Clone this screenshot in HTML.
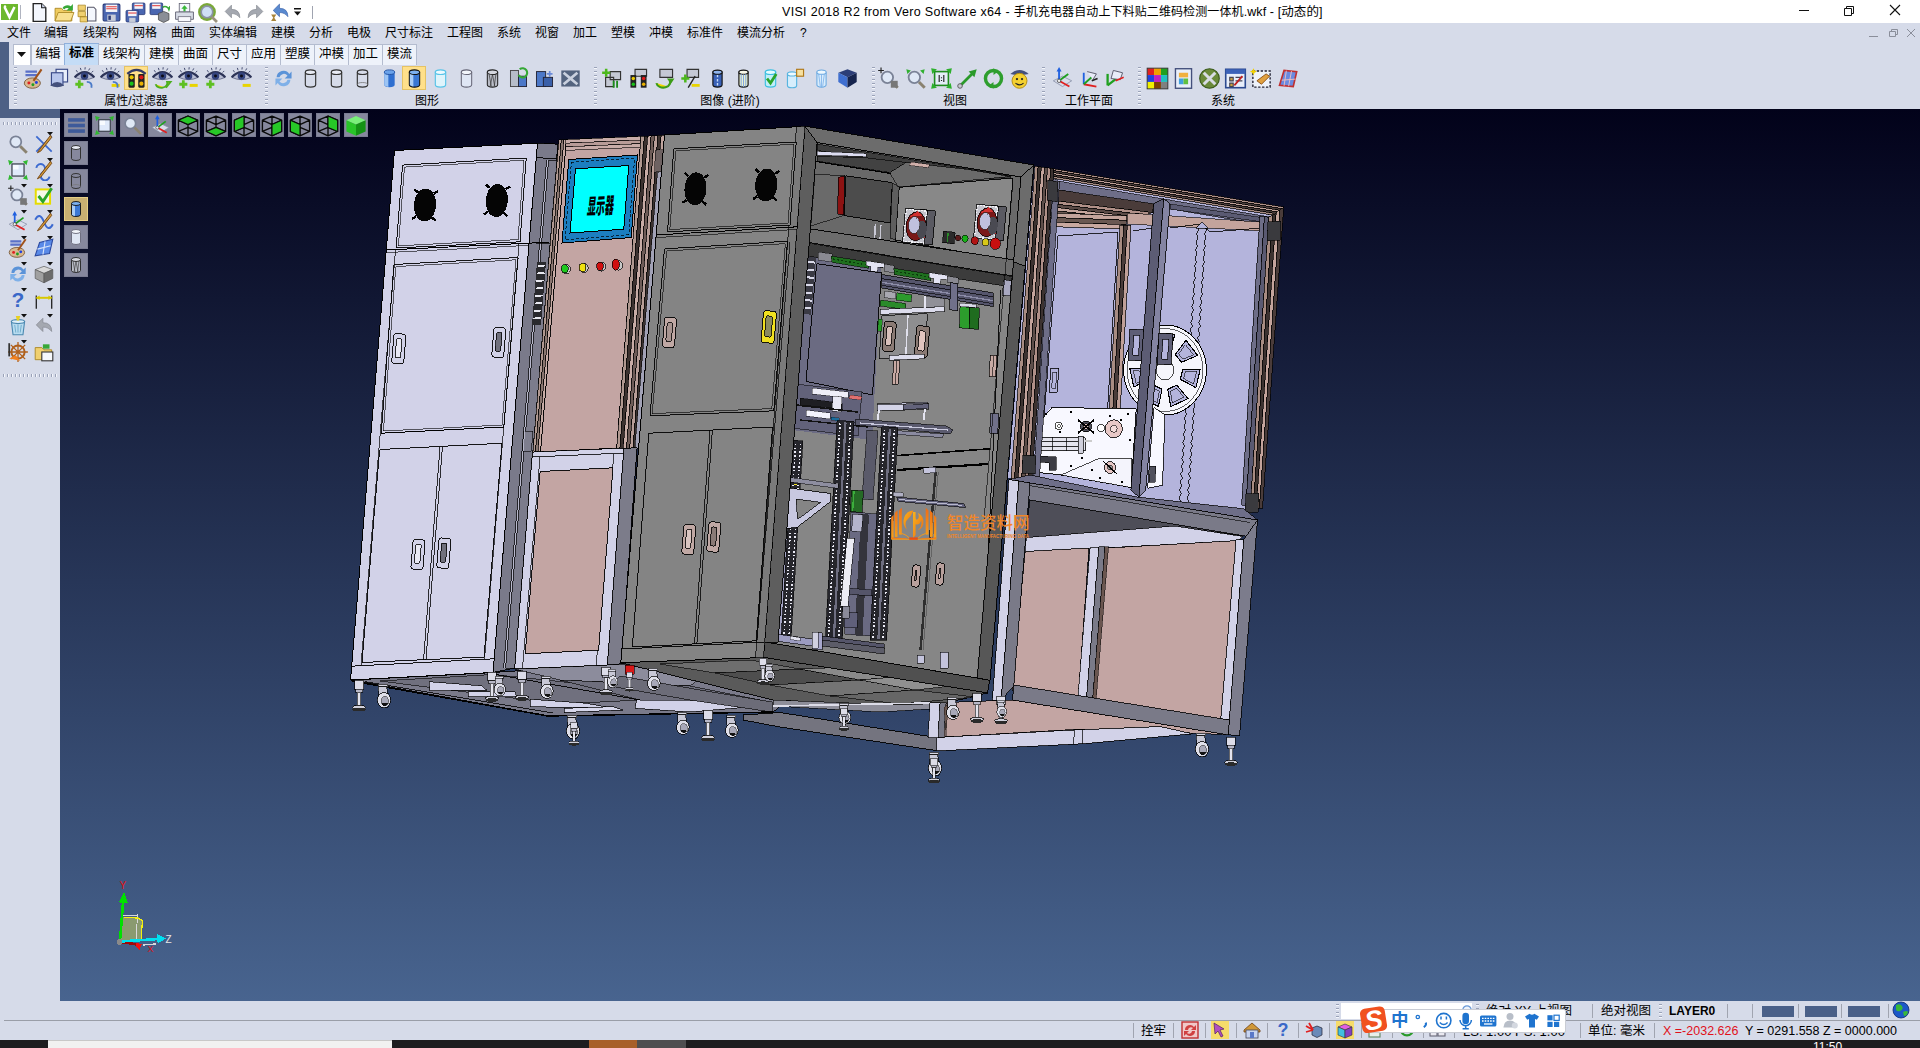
<!DOCTYPE html><html lang="zh"><head><meta charset="utf-8"><title>VISI 2018 R2</title><style>

*{box-sizing:border-box;margin:0;padding:0}
html,body{width:1920px;height:1048px;overflow:hidden;background:#d6dbe9;font-family:"Liberation Sans","Noto Sans CJK SC",sans-serif;font-size:12px;color:#000}
.abs{position:absolute}
#title{position:absolute;left:0;top:0;width:1920px;height:23px;background:#fff}
#title .t{position:absolute;left:782px;top:4px;width:540px;white-space:nowrap;font-size:12.5px;line-height:16px;color:#000;letter-spacing:0.1px}
#menu{position:absolute;left:0;top:23px;width:1920px;height:19px;background:#d6dbe9}
#menu span{position:absolute;top:2px;font-size:12px;line-height:17px;white-space:nowrap}
#leftstrip{position:absolute;left:0;top:42px;width:9px;height:76px;background:#4d6085}
#leftstrip2{position:absolute;left:0;top:109px;width:60px;height:9px;background:#4d6085}
#tabs{position:absolute;left:9px;top:42px;width:1911px;height:22px;background:#d6dbe9}
.tab{position:absolute;top:44px;height:21px;background:#eef2fa;border:1px solid #b4bccf;border-bottom:none;font-size:12.5px;line-height:19px;text-align:center;white-space:nowrap}
.tab.sel{top:43px;height:22px;background:#c4dcf6;border-color:#8fb0dc;font-weight:bold;line-height:19px}
#ribbon{position:absolute;left:9px;top:64px;width:1911px;height:45px;background:#d6dbe9}
.grp{position:absolute;top:94px;font-size:12px;line-height:14px;white-space:nowrap;transform:translateX(-50%)}
.grip{position:absolute;top:67px;width:3px;height:39px;background-image:repeating-linear-gradient(180deg,#9aa2b8 0 1px,#f4f6fb 1px 2px,transparent 2px 4px)}
.ic{position:absolute;width:20px;height:20px}
.hl{position:absolute;background:#ffe08a;border:1px solid #e5c365}
#leftbar{position:absolute;left:0;top:118px;width:60px;height:883px;background:#d6dbe9}
.hgrip{position:absolute;left:3px;width:54px;height:3px;background-image:repeating-linear-gradient(90deg,#9aa2b8 0 1px,#f4f6fb 1px 2px,transparent 2px 4px)}
#vp{position:absolute;left:60px;top:109px;width:1860px;height:892px;background:linear-gradient(180deg,#02021a 0%,#48648f 100%)}
.vb{position:absolute;width:24px;height:24px;background:#86889d;border:1px solid #7a7c92}
.vb.sel{background:#c9b072;border-color:#e6cf86}
#status{position:absolute;left:0;top:1001px;width:1920px;height:39px;background:#d6dbe9}
#status .ln{position:absolute;left:4px;top:19px;width:1916px;height:1px;background:#9a9ea8}
#status span{position:absolute;white-space:nowrap;font-size:12.5px;line-height:16px}
#task{position:absolute;left:0;top:1040px;width:1920px;height:8px;background:#1d1d1f;overflow:hidden}

</style></head><body>
<div id="title">
<svg class="ic" style="left:0.0px;top:2.0px;width:20px;height:20px" viewBox="0 0 20 20"><rect x="1" y="2" width="17" height="16" fill="#6cb82c"/><path d="M4.5 5l5 10 5-10" stroke="#fff" stroke-width="2.6" fill="none"/><circle cx="5" cy="4.5" r="1.2" fill="#fff"/></svg>
<div class="abs" style="left:20px;top:5px;width:1px;height:14px;background:#b0b4c0"></div>
<svg class="ic" style="left:28.5px;top:1.5px;width:21px;height:21px" viewBox="0 0 20 20"><path d="M4 1.5h8l4 4V18.5H4z" fill="#f4f7fd" stroke="#222" stroke-width="1.3"/><path d="M12 1.5v4h4" fill="#cfd8ee" stroke="#222" stroke-width="1"/></svg>
<svg class="ic" style="left:53.5px;top:1.5px;width:21px;height:21px" viewBox="0 0 20 20"><path d="M1 6h6l2 2h8v10H1z" fill="#f0cc60" stroke="#a88420" stroke-width=".8"/><path d="M1 18l3-8h15l-3 8z" fill="#f8e090" stroke="#a88420" stroke-width=".8"/><path d="M8 6a5 4 0 0 1 8-2l2-2v6h-6l2-2a3 2 0 0 0-4 1z" fill="#38a838"/></svg>
<svg class="ic" style="left:76.5px;top:1.5px;width:21px;height:21px" viewBox="0 0 20 20"><path d="M1 3h7v5H1zM1 9h7v5H1zM3 14h7v5H3z" fill="#f0d070" stroke="#a88420" stroke-width=".7"/><path d="M10 5h6l2 2v11h-8z" fill="#f4f7fd" stroke="#556" stroke-width="1"/></svg>
<svg class="ic" style="left:100.5px;top:1.5px;width:21px;height:21px" viewBox="0 0 20 20"><rect x="2" y="2" width="16" height="16" rx="1" fill="#4a66b0" stroke="#2a3a78" stroke-width="1"/><rect x="4.5" y="2.5" width="11" height="7" fill="#f4f4f8"/><path d="M5 4.5h10M5 6.5h10" stroke="#e04040" stroke-width="1"/><rect x="6" y="12" width="8" height="6" fill="#c8ccd8"/><rect x="7" y="13" width="2.4" height="4" fill="#2a3a78"/></svg>
<svg class="ic" style="left:124.5px;top:1.5px;width:21px;height:21px" viewBox="0 0 20 20"><rect x="7" y="1" width="12" height="11" rx="1" fill="#4a66b0" stroke="#2a3a78" stroke-width=".8"/><rect x="9" y="1.5" width="8" height="5" fill="#f4f4f8"/><path d="M9 3.5h8" stroke="#e04040" stroke-width="1"/><rect x="1" y="8" width="12" height="11" rx="1" fill="#4a66b0" stroke="#2a3a78" stroke-width=".8"/><rect x="3" y="8.5" width="8" height="5" fill="#f4f4f8"/><path d="M3 10.5h8" stroke="#e04040" stroke-width="1"/><rect x="4" y="15" width="6" height="4" fill="#c8ccd8"/></svg>
<svg class="ic" style="left:148.5px;top:1.5px;width:21px;height:21px" viewBox="0 0 20 20"><rect x="1" y="1" width="12" height="11" rx="1" fill="#4a66b0" stroke="#2a3a78" stroke-width=".8"/><rect x="3" y="1.5" width="8" height="5" fill="#f4f4f8"/><path d="M3 3.5h8" stroke="#e04040" stroke-width="1"/><path d="M9 11l5-2 5 2v6l-5 2.5-5-2.5z" fill="#8a8e96" stroke="#444" stroke-width=".7"/><path d="M13 5a4 4 0 0 1 6 2l1-3" stroke="#38a838" stroke-width="1.6" fill="none"/></svg>
<svg class="ic" style="left:173.5px;top:1.5px;width:21px;height:21px" viewBox="0 0 20 20"><rect x="5" y="1.5" width="10" height="8" fill="#f4f7fd" stroke="#667" stroke-width=".8"/><path d="M10 3l3 3.5h-2v2.5h-2V6.5H7z" fill="#38b838"/><path d="M1.5 9.5h17v7h-17z" fill="#d8dce6" stroke="#667" stroke-width=".9"/><rect x="4" y="14" width="12" height="4.5" fill="#f8f8fc" stroke="#667" stroke-width=".7"/></svg>
<svg class="ic" style="left:196.5px;top:1.5px;width:21px;height:21px" viewBox="0 0 20 20"><circle cx="9.5" cy="9.5" r="8.5" fill="#7aa838"/><circle cx="9.5" cy="9.5" r="5.5" fill="#cfe0f6" stroke="#8a92a6" stroke-width="1.6"/><path d="M14 14l5 5" stroke="#9a9280" stroke-width="2.6"/></svg>
<svg class="ic" style="left:221.5px;top:1.5px;width:21px;height:21px" viewBox="0 0 20 20"><path d="M3 9l6-6v4q8 0 8 8-3-4-8-4v4z" fill="#a4a8b0" stroke="#80848c" stroke-width=".6"/></svg>
<svg class="ic" style="left:244.5px;top:1.5px;width:21px;height:21px" viewBox="0 0 20 20"><path d="M17 9l-6-6v4q-8 0-8 8 3-4 8-4v4z" fill="#a4a8b0" stroke="#80848c" stroke-width=".6"/></svg>
<svg class="ic" style="left:268.5px;top:1.5px;width:21px;height:21px" viewBox="0 0 20 20"><path d="M4 8l6-6v4q8 0 8 8-3-4-8-4v4z" fill="#5a8ad0" stroke="#3a60a8" stroke-width=".6"/><path d="M2 12h5l-2 3 2 3H2l2-3z" fill="#a8843a"/></svg>
<svg class="abs" style="left:293px;top:8px" width="10" height="8" viewBox="0 0 10 8"><path d="M1 0h7v1.4H1zM1 3.5h7L4.5 7.5z" fill="#111"/></svg>
<div class="abs" style="left:312px;top:6px;width:1px;height:13px;background:#a0a4b0"></div>
<div class="t"><span style="letter-spacing:.32px">VISI 2018 R2 from Vero Software x64 - </span><span style="font-size:12px">手机充电器自动上下料贴二维码检测一体机</span>.wkf - [动态的]</div>
<svg class="abs" style="left:1790px;top:0" width="130" height="23" viewBox="0 0 130 23"><path d="M9 10.5h10" stroke="#111" stroke-width="1"/><path d="M54.5 8.5h7v7h-7zM56.5 8.5v-2h7v7h-2" fill="none" stroke="#111" stroke-width="1"/><path d="M100 5l10 10M110 5l-10 10" stroke="#111" stroke-width="1.1"/></svg>
</div>
<div id="menu">
<span style="left:7px">文件</span>
<span style="left:44px">编辑</span>
<span style="left:83px">线架构</span>
<span style="left:133px">网格</span>
<span style="left:171px">曲面</span>
<span style="left:209px">实体编辑</span>
<span style="left:271px">建模</span>
<span style="left:309px">分析</span>
<span style="left:347px">电极</span>
<span style="left:385px">尺寸标注</span>
<span style="left:447px">工程图</span>
<span style="left:497px">系统</span>
<span style="left:535px">视窗</span>
<span style="left:573px">加工</span>
<span style="left:611px">塑模</span>
<span style="left:649px">冲模</span>
<span style="left:687px">标准件</span>
<span style="left:737px">模流分析</span>
<span style="left:800px">?</span>
<svg class="abs" style="left:1866px;top:3px" width="54" height="12" viewBox="0 0 54 12"><path d="M3 10.5h9" stroke="#8a8e9a" stroke-width="1"/><path d="M23.5 5.5h6v5h-6zM25.5 5.5v-2h6v5h-2" fill="none" stroke="#8a8e9a" stroke-width="1"/><path d="M41 3l8 8M49 3l-8 8" stroke="#8a8e9a" stroke-width="1"/></svg>
</div>
<div id="leftstrip"></div>
<div id="tabs"></div><div id="ribbon"></div><div id="leftstrip2"></div>
<div class="tab" style="left:13px;width:18px;background:#fff"><svg width="10" height="6" viewBox="0 0 10 6" style="margin-top:7px"><path d="M0 0h9L4.5 5z" fill="#111"/></svg></div>
<div class="tab" style="left:31px;width:34px">编辑</div>
<div class="tab sel" style="left:64px;width:35px">标准</div>
<div class="tab" style="left:98px;width:47px">线架构</div>
<div class="tab" style="left:144px;width:35px">建模</div>
<div class="tab" style="left:178px;width:35px">曲面</div>
<div class="tab" style="left:212px;width:35px">尺寸</div>
<div class="tab" style="left:246px;width:35px">应用</div>
<div class="tab" style="left:280px;width:35px">塑膜</div>
<div class="tab" style="left:314px;width:35px">冲模</div>
<div class="tab" style="left:348px;width:35px">加工</div>
<div class="tab" style="left:382px;width:35px">模流</div>
<div class="grip" style="left:14px"></div>
<div class="grip" style="left:265px"></div>
<div class="grip" style="left:594px"></div>
<div class="grip" style="left:872px"></div>
<div class="grip" style="left:1042px"></div>
<div class="grip" style="left:1138px"></div>
<div class="hl" style="left:124px;top:66px;width:24px;height:24px"></div>
<div class="hl" style="left:402px;top:66px;width:24px;height:24px"></div>
<svg class="ic" style="left:21.5px;top:66.5px;width:23px;height:23px" viewBox="0 0 20 20"><path d="M3 3h10v2H3zM3 6h10v2H3z" fill="#5a70c8"/><ellipse cx="9" cy="14" rx="7" ry="4.5" fill="#d8b890" stroke="#7a5a3a" stroke-width=".8"/><circle cx="6" cy="14" r="1.3" fill="#e02020"/><circle cx="9.5" cy="15.5" r="1.3" fill="#20a020"/><circle cx="12.5" cy="13.5" r="1.3" fill="#2040e0"/><path d="M17 2L10 12" stroke="#a0521a" stroke-width="1.8"/></svg>
<svg class="ic" style="left:47.5px;top:66.5px;width:23px;height:23px" viewBox="0 0 20 20"><rect x="7" y="2" width="10" height="11" fill="#e8eefa" stroke="#3a4a88" stroke-width="1"/><rect x="3" y="5" width="10" height="11" fill="#b8c6ec" stroke="#3a4a88" stroke-width="1"/><path d="M2 16Q8 10 14 16Q8 19 2 16Z" fill="#44507c"/></svg>
<svg class="ic" style="left:72.5px;top:66.5px;width:23px;height:23px" viewBox="0 0 20 20"><path d="M1.500 9Q10 0 18.500 9Q10 13 1.500 9Z" fill="#b9bed4" stroke="#565c7c" stroke-width=".7"/><path d="M1.500 9Q10 0 18.500 9" fill="none" stroke="#2c3357" stroke-width="1.900"/><path d="M4 4.600l-1.200-1.800M7 2.800l-.6-2M10.400 2.200l.2-2M13.600 3l1-1.800M16.200 4.800l1.400-1.400" stroke="#3a4166" stroke-width=".8"/><circle cx="10" cy="7.800" r="3.300" fill="#34447e"/><circle cx="10" cy="7.800" r="1.300" fill="#0c0c18"/><path d="M2 15h7M5.5 11.5v7" stroke="#5ec022" stroke-width="2.4"/><path d="M12 13q5 0 4 5" stroke="#4a7ac8" stroke-width="1.6" fill="none"/></svg>
<svg class="ic" style="left:98.5px;top:66.5px;width:23px;height:23px" viewBox="0 0 20 20"><path d="M1.500 9Q10 0 18.500 9Q10 13 1.500 9Z" fill="#b9bed4" stroke="#565c7c" stroke-width=".7"/><path d="M1.500 9Q10 0 18.500 9" fill="none" stroke="#2c3357" stroke-width="1.900"/><path d="M4 4.600l-1.200-1.800M7 2.800l-.6-2M10.400 2.200l.2-2M13.600 3l1-1.800M16.200 4.800l1.400-1.400" stroke="#3a4166" stroke-width=".8"/><circle cx="10" cy="7.800" r="3.300" fill="#34447e"/><circle cx="10" cy="7.800" r="1.300" fill="#0c0c18"/><path d="M11 16h7" stroke="#e8d400" stroke-width="2.6"/><path d="M12 13q5 0 4 5" stroke="#4a7ac8" stroke-width="1.6" fill="none"/></svg>
<svg class="ic" style="left:124.5px;top:66.5px;width:23px;height:23px" viewBox="0 0 20 20"><path d="M2 6Q10 -1 18 6" fill="none" stroke="#333a66" stroke-width="2"/><rect x="3" y="6" width="5.5" height="12" rx="1" fill="#222"/><rect x="11.5" y="6" width="5.5" height="12" rx="1" fill="#222"/><circle cx="5.75" cy="9" r="1.8" fill="#e8c800"/><circle cx="5.75" cy="14.5" r="1.8" fill="#18c018"/><circle cx="14.25" cy="9" r="1.8" fill="#e01818"/><circle cx="14.25" cy="14.5" r="1.8" fill="#e8b000"/></svg>
<svg class="ic" style="left:150.5px;top:66.5px;width:23px;height:23px" viewBox="0 0 20 20"><path d="M1.500 9Q10 0 18.500 9Q10 13 1.500 9Z" fill="#b9bed4" stroke="#565c7c" stroke-width=".7"/><path d="M1.500 9Q10 0 18.500 9" fill="none" stroke="#2c3357" stroke-width="1.900"/><path d="M4 4.600l-1.200-1.800M7 2.800l-.6-2M10.400 2.200l.2-2M13.600 3l1-1.800M16.200 4.800l1.400-1.400" stroke="#3a4166" stroke-width=".8"/><circle cx="10" cy="7.800" r="3.300" fill="#34447e"/><circle cx="10" cy="7.800" r="1.300" fill="#0c0c18"/><path d="M4 15a5 4 0 1 0 10-2l3 0-4 5" fill="#f2d600" stroke="#4caf20" stroke-width="1.6"/></svg>
<svg class="ic" style="left:176.5px;top:66.5px;width:23px;height:23px" viewBox="0 0 20 20"><path d="M1.500 9Q10 0 18.500 9Q10 13 1.500 9Z" fill="#b9bed4" stroke="#565c7c" stroke-width=".7"/><path d="M1.500 9Q10 0 18.500 9" fill="none" stroke="#2c3357" stroke-width="1.900"/><path d="M4 4.600l-1.200-1.800M7 2.800l-.6-2M10.400 2.200l.2-2M13.600 3l1-1.800M16.200 4.800l1.400-1.400" stroke="#3a4166" stroke-width=".8"/><circle cx="10" cy="7.800" r="3.300" fill="#34447e"/><circle cx="10" cy="7.800" r="1.300" fill="#0c0c18"/><path d="M2 15h7M5.5 11.5v7" stroke="#5ec022" stroke-width="2.4"/><path d="M11 16h7" stroke="#e8d400" stroke-width="2.6"/></svg>
<svg class="ic" style="left:203.5px;top:66.5px;width:23px;height:23px" viewBox="0 0 20 20"><path d="M1.500 9Q10 0 18.500 9Q10 13 1.500 9Z" fill="#b9bed4" stroke="#565c7c" stroke-width=".7"/><path d="M1.500 9Q10 0 18.500 9" fill="none" stroke="#2c3357" stroke-width="1.900"/><path d="M4 4.600l-1.200-1.800M7 2.800l-.6-2M10.400 2.200l.2-2M13.600 3l1-1.800M16.200 4.800l1.400-1.400" stroke="#3a4166" stroke-width=".8"/><circle cx="10" cy="7.800" r="3.300" fill="#34447e"/><circle cx="10" cy="7.800" r="1.300" fill="#0c0c18"/><path d="M2 15h7M5.5 11.5v7" stroke="#5ec022" stroke-width="2.4"/></svg>
<svg class="ic" style="left:229.5px;top:66.5px;width:23px;height:23px" viewBox="0 0 20 20"><path d="M1.500 9Q10 0 18.500 9Q10 13 1.500 9Z" fill="#b9bed4" stroke="#565c7c" stroke-width=".7"/><path d="M1.500 9Q10 0 18.500 9" fill="none" stroke="#2c3357" stroke-width="1.900"/><path d="M4 4.600l-1.200-1.800M7 2.800l-.6-2M10.400 2.200l.2-2M13.600 3l1-1.800M16.200 4.800l1.400-1.400" stroke="#3a4166" stroke-width=".8"/><circle cx="10" cy="7.800" r="3.300" fill="#34447e"/><circle cx="10" cy="7.800" r="1.300" fill="#0c0c18"/><path d="M11 16h7" stroke="#e8d400" stroke-width="2.6"/></svg>
<svg class="ic" style="left:271.5px;top:66.5px;width:23px;height:23px" viewBox="0 0 20 20"><path d="M4 9A6 6 0 0 1 15 6L17 4V10H11L13.5 7.5A4 4 0 0 0 6.5 9Z" fill="#5b93d8"/><path d="M16 11A6 6 0 0 1 5 14L3 16V10H9L6.5 12.5A4 4 0 0 0 13.5 11Z" fill="#7fb0e8"/></svg>
<svg class="ic" style="left:298.5px;top:66.5px;width:23px;height:23px" viewBox="0 0 20 20"><ellipse cx="10" cy="4.5" rx="4.5" ry="2" fill="#e8ebf4" stroke="#333" stroke-width="1"/><path d="M5.5 4.5V15.5A4.5 2 0 0 0 14.5 15.5V4.5" fill="none" stroke="#333" stroke-width="1"/></svg>
<svg class="ic" style="left:324.5px;top:66.5px;width:23px;height:23px" viewBox="0 0 20 20"><ellipse cx="10" cy="4.5" rx="4.5" ry="2" fill="#e8ebf4" stroke="#333" stroke-width="1"/><path d="M5.5 4.5V15.5A4.5 2 0 0 0 14.5 15.5V4.5" fill="none" stroke="#333" stroke-width="1"/></svg>
<svg class="ic" style="left:350.5px;top:66.5px;width:23px;height:23px" viewBox="0 0 20 20"><ellipse cx="10" cy="4.5" rx="4.5" ry="2" fill="none" stroke="#333" stroke-width="1"/><path d="M5.5 4.5V15.5A4.5 2 0 0 0 14.5 15.5V4.5" fill="none" stroke="#333" stroke-width="1"/><path d="M5.5 15.5A4.5 2 0 0 1 14.5 15.5" fill="none" stroke="#777" stroke-width=".7"/></svg>
<svg class="ic" style="left:377.5px;top:66.5px;width:23px;height:23px" viewBox="0 0 20 20"><path d="M5.5 4.5V15.5A4.5 2 0 0 0 14.5 15.5V4.5Z" fill="#2f6fd0"/><path d="M5.5 4.5V15.5A4.5 2 0 0 0 9 17.3V6.3Z" fill="#9cc4f4"/><ellipse cx="10" cy="4.5" rx="4.5" ry="2" fill="#6aa2ea" stroke="#1d4fa0" stroke-width=".8"/></svg>
<svg class="ic" style="left:402.5px;top:66.5px;width:23px;height:23px" viewBox="0 0 20 20"><path d="M5.5 4.5V15.5A4.5 2 0 0 0 14.5 15.5V4.5Z" fill="#3b78d4" stroke="#111" stroke-width=".9"/><path d="M6 5V15.5A4.5 2 0 0 0 9 17V6.5Z" fill="#a8ccf6"/><ellipse cx="10" cy="4.5" rx="4.5" ry="2" fill="#7db0ee" stroke="#111" stroke-width=".9"/></svg>
<svg class="ic" style="left:428.5px;top:66.5px;width:23px;height:23px" viewBox="0 0 20 20"><path d="M5.5 4.5V15.5A4.5 2 0 0 0 14.5 15.5V4.5Z" fill="#dff4fb" stroke="#58c4e8" stroke-width="1"/><ellipse cx="10" cy="4.5" rx="4.5" ry="2" fill="#eefaff" stroke="#58c4e8" stroke-width="1"/></svg>
<svg class="ic" style="left:454.5px;top:66.5px;width:23px;height:23px" viewBox="0 0 20 20"><path d="M5.5 4.5V15.5A4.5 2 0 0 0 14.5 15.5V4.5Z" fill="#dfe6f4" stroke="#667" stroke-width=".9"/><ellipse cx="10" cy="4.5" rx="4.5" ry="2" fill="#f2f5fb" stroke="#667" stroke-width=".9"/></svg>
<svg class="ic" style="left:480.5px;top:66.5px;width:23px;height:23px" viewBox="0 0 20 20"><path d="M5.5 4.5V15.5A4.5 2 0 0 0 14.5 15.5V4.5Z" fill="#b9bcc6" stroke="#222" stroke-width=".9"/><ellipse cx="10" cy="4.5" rx="4.5" ry="2" fill="#d4d6de" stroke="#222" stroke-width=".9"/><path d="M7 6L9 17M10 6.5L8 17M10 6.5L12 17M13 6L11.5 17" stroke="#333" stroke-width=".6" fill="none"/></svg>
<svg class="ic" style="left:506.5px;top:66.5px;width:23px;height:23px" viewBox="0 0 20 20"><rect x="3" y="3" width="7" height="14" fill="#b7bdc9" stroke="#444" stroke-width=".8"/><rect x="10" y="8" width="7" height="9" fill="#4c78c8" stroke="#223" stroke-width=".8"/><path d="M11 2a4 4 0 1 1-1 5" stroke="#35a835" stroke-width="1.8" fill="none"/></svg>
<svg class="ic" style="left:532.5px;top:66.5px;width:23px;height:23px" viewBox="0 0 20 20"><rect x="3" y="4" width="8" height="13" fill="#4c78c8" stroke="#223" stroke-width=".8"/><rect x="9" y="9" width="8" height="8" fill="#3a5fa8" stroke="#223" stroke-width=".8"/><path d="M12 6h5M14.5 3.5v5" stroke="#6a8ad8" stroke-width="1.5"/></svg>
<svg class="ic" style="left:558.5px;top:66.5px;width:23px;height:23px" viewBox="0 0 20 20"><rect x="2" y="3" width="16" height="14" fill="#53637e"/><path d="M4 5l12 10M16 5L4 15" stroke="#c9d0de" stroke-width="2.4"/></svg>
<svg class="ic" style="left:600.5px;top:66.5px;width:23px;height:23px" viewBox="0 0 20 20"><path d="M8 4h9v7H8zM4 9h7v8H4z" fill="#c4c8d4" stroke="#333" stroke-width="1"/><path d="M1 5h7M4.5 1.5v7" stroke="#4cb81c" stroke-width="2.2"/><path d="M11 12v6M14 12v6" stroke="#1c8c1c" stroke-width="1.6"/></svg>
<svg class="ic" style="left:626.5px;top:66.5px;width:23px;height:23px" viewBox="0 0 20 20"><path d="M7 2h10v6H7z" fill="#c4c8d4" stroke="#333" stroke-width="1"/><rect x="3" y="7" width="5" height="11" fill="#222"/><rect x="12" y="7" width="5" height="11" fill="#222"/><circle cx="5.5" cy="10" r="1.5" fill="#e8c800"/><circle cx="5.5" cy="15" r="1.5" fill="#18c018"/><circle cx="14.5" cy="10" r="1.5" fill="#e01818"/><circle cx="14.5" cy="15" r="1.5" fill="#e8b000"/></svg>
<svg class="ic" style="left:652.5px;top:66.5px;width:23px;height:23px" viewBox="0 0 20 20"><path d="M6 2h11v7H6z" fill="#c4c8d4" stroke="#333" stroke-width="1"/><path d="M3 14a6 4.5 0 1 0 11-3l3 0-4 6" fill="#f2d600" stroke="#3c9c18" stroke-width="1.8"/></svg>
<svg class="ic" style="left:678.5px;top:66.5px;width:23px;height:23px" viewBox="0 0 20 20"><path d="M7 2h10v7H7z" fill="#c4c8d4" stroke="#333" stroke-width="1"/><path d="M2 10h7M5.5 6.5v7" stroke="#4cb81c" stroke-width="2.2"/><path d="M14 8L8 18" stroke="#222" stroke-width="1.2"/><path d="M11 16h7" stroke="#e8d400" stroke-width="2.4"/></svg>
<svg class="ic" style="left:705.5px;top:66.5px;width:23px;height:23px" viewBox="0 0 20 20"><path d="M6 4.5V15.5A4 2 0 0 0 14 15.5V4.5Z" fill="#3a62b8" stroke="#111" stroke-width="1"/><ellipse cx="10" cy="4.5" rx="4" ry="1.8" fill="#8fb4ee" stroke="#111" stroke-width="1"/><path d="M10 7v9" stroke="#c8dcf8" stroke-width="1.2" stroke-dasharray="2 1.5"/></svg>
<svg class="ic" style="left:731.5px;top:66.5px;width:23px;height:23px" viewBox="0 0 20 20"><path d="M6 4.5V15.5A4 2 0 0 0 14 15.5V4.5Z" fill="#e8f0d0" stroke="#111" stroke-width="1"/><ellipse cx="10" cy="4.5" rx="4" ry="1.8" fill="#f8f8e8" stroke="#111" stroke-width="1"/><path d="M8 6v11M10 6.5v11M12 6v11" stroke="#7aa0e0" stroke-width=".8"/></svg>
<svg class="ic" style="left:758.5px;top:66.5px;width:23px;height:23px" viewBox="0 0 20 20"><path d="M5.5 4.5V15.5A4.5 2 0 0 0 14.5 15.5V4.5Z" fill="#bfeef8" stroke="#3cc0e0" stroke-width="1"/><ellipse cx="10" cy="4.5" rx="4.5" ry="2" fill="#e4fbff" stroke="#3cc0e0" stroke-width="1"/><path d="M7 10l3 4 5-8" stroke="#2aa52a" stroke-width="2.4" fill="none"/></svg>
<svg class="ic" style="left:783.5px;top:66.5px;width:23px;height:23px" viewBox="0 0 20 20"><path d="M3 6V16A4 2 0 0 0 11 16V6Z" fill="#d6eefc" stroke="#58b4e0" stroke-width="1"/><ellipse cx="7" cy="6" rx="4" ry="1.8" fill="#eefaff" stroke="#58b4e0" stroke-width="1"/><rect x="11" y="2" width="6" height="6" fill="#f6e0a0" stroke="#b07818" stroke-width="1"/></svg>
<svg class="ic" style="left:809.5px;top:66.5px;width:23px;height:23px" viewBox="0 0 20 20"><path d="M6 4.5V15.5A4 2 0 0 0 14 15.5V4.5Z" fill="#d8ecfc" stroke="#6aa8e0" stroke-width=".9"/><ellipse cx="10" cy="4.5" rx="4" ry="1.8" fill="#eef8ff" stroke="#6aa8e0" stroke-width=".9"/><path d="M7.5 6l1.5 11M10 6.5v11M12.5 6L11 17" stroke="#7ab0e8" stroke-width=".7"/></svg>
<svg class="ic" style="left:835.5px;top:66.5px;width:23px;height:23px" viewBox="0 0 20 20"><path d="M2 5l8-3 8 3-8 4z" fill="#2c3e78"/><path d="M2 5l8 4v9l-8-5z" fill="#3f6fd0"/><path d="M18 5l-8 4v9l8-5z" fill="#16244e"/></svg>
<svg class="ic" style="left:876.5px;top:66.5px;width:23px;height:23px" viewBox="0 0 20 20"><circle cx="9" cy="9" r="5" fill="#dfe8f6" stroke="#7a8296" stroke-width="1.6"/><path d="M13 13l5 5" stroke="#8a8270" stroke-width="2.6"/><path d="M1 3h5M3.5 .5v5" stroke="#222" stroke-width="1"/><rect x="12" y="12" width="6" height="6" fill="#777"/></svg>
<svg class="ic" style="left:903.5px;top:66.5px;width:23px;height:23px" viewBox="0 0 20 20"><circle cx="9" cy="9" r="5" fill="#dfe8f6" stroke="#7a8296" stroke-width="1.6"/><path d="M13 13l5 5" stroke="#8a8270" stroke-width="2.6"/><path d="M2 2l4 1-3 3zM18 2l-4 1 3 3z" fill="#30b030"/></svg>
<svg class="ic" style="left:929.5px;top:66.5px;width:23px;height:23px" viewBox="0 0 20 20"><rect x="4" y="4" width="12" height="12" fill="#e4ecf8" stroke="#1e8c1e" stroke-width="1.4"/><path d="M1 1l5 1-4 4zM19 1l-5 1 4 4zM1 19l5-1-4-4zM19 19l-5-1 4-4z" fill="#2cb02c"/><path d="M8 7v6M12 7v6M10 9v.8M10 11.4v.8" stroke="#222" stroke-width="1"/></svg>
<svg class="ic" style="left:955.5px;top:66.5px;width:23px;height:23px" viewBox="0 0 20 20"><path d="M3 17L15 5" stroke="#2a9a2a" stroke-width="2.4"/><path d="M18 2l-7 2 5 5z" fill="#2a9a2a"/><circle cx="3.5" cy="16.5" r="2" fill="#c8cad4" stroke="#555" stroke-width=".8"/></svg>
<svg class="ic" style="left:981.5px;top:66.5px;width:23px;height:23px" viewBox="0 0 20 20"><circle cx="10" cy="10" r="7" fill="none" stroke="#2e9e2e" stroke-width="3"/><path d="M10 1l4 3-4 3zM10 19l-4-3 4-3z" fill="#2e9e2e"/></svg>
<svg class="ic" style="left:1007.5px;top:66.5px;width:23px;height:23px" viewBox="0 0 20 20"><path d="M2 6Q10 -1 18 6Q10 8 2 6Z" fill="#44507c"/><circle cx="10" cy="12" r="6.5" fill="#f4d030" stroke="#b08a10" stroke-width=".8"/><circle cx="7.8" cy="10.5" r="1" fill="#222"/><circle cx="12.2" cy="10.5" r="1" fill="#222"/><path d="M6.5 14q3.5 3 7 0" stroke="#222" stroke-width="1" fill="none"/></svg>
<svg class="ic" style="left:1050.5px;top:66.5px;width:23px;height:23px" viewBox="0 0 20 20"><path d="M2 12l8-4 8 4-8 5z" fill="#d8dcea" stroke="#8890a8" stroke-width=".7"/><path d="M7 12V2" stroke="#2060e0" stroke-width="1.6"/><path d="M7 12l9 5" stroke="#e02020" stroke-width="1.6"/><path d="M7 12l8-6" stroke="#20a020" stroke-width="1.6"/><path d="M7 0l-2.2 4h4.4z" fill="#2060e0"/><circle cx="7" cy="12" r="1.5" fill="#eee" stroke="#333" stroke-width=".6"/></svg>
<svg class="ic" style="left:1077.5px;top:66.5px;width:23px;height:23px" viewBox="0 0 20 20"><path d="M5 15V5" stroke="#2060e0" stroke-width="1.6"/><path d="M5 15l11 2" stroke="#e02020" stroke-width="1.6"/><path d="M5 15l9-8" stroke="#20a020" stroke-width="1.6"/><path d="M8 4l8 2-3 5" fill="#e8ecf8" stroke="#556" stroke-width=".8"/><path d="M12 12l5-2" stroke="#222" stroke-width="1.4"/></svg>
<svg class="ic" style="left:1102.5px;top:66.5px;width:23px;height:23px" viewBox="0 0 20 20"><path d="M4 16V6" stroke="#20a020" stroke-width="2"/><path d="M4 16l9-7" stroke="#20a020" stroke-width="2"/><path d="M9 3l8 2-2 6-8-1z" fill="#e8ecf8" stroke="#556" stroke-width=".8"/><path d="M11 12l7-3" stroke="#e02020" stroke-width="1.4"/></svg>
<svg class="ic" style="left:1145.5px;top:66.5px;width:23px;height:23px" viewBox="0 0 20 20"><rect x="1" y="1" width="6" height="6" fill="#e02020"/><rect x="7" y="1" width="6" height="6" fill="#f0a000"/><rect x="13" y="1" width="6" height="6" fill="#20a020"/><rect x="1" y="7" width="6" height="6" fill="#2040e0"/><rect x="7" y="7" width="6" height="6" fill="#c020c0"/><rect x="13" y="7" width="6" height="6" fill="#20c0c0"/><rect x="1" y="13" width="6" height="6" fill="#f0f000"/><rect x="7" y="13" width="6" height="6" fill="#804000"/><rect x="13" y="13" width="6" height="6" fill="#808080"/><rect x="1" y="1" width="18" height="18" fill="none" stroke="#333" stroke-width=".8"/></svg>
<svg class="ic" style="left:1171.5px;top:66.5px;width:23px;height:23px" viewBox="0 0 20 20"><rect x="3" y="1.5" width="14" height="17" fill="#e8eefa" stroke="#44507c" stroke-width="1.2"/><rect x="6" y="5" width="8" height="4" fill="#f0b040"/><rect x="6" y="10" width="4" height="5" fill="#40a0e0"/><rect x="10" y="10" width="4" height="5" fill="#60c040"/></svg>
<svg class="ic" style="left:1197.5px;top:66.5px;width:23px;height:23px" viewBox="0 0 20 20"><circle cx="10" cy="10" r="8.5" fill="#6a8a3a" stroke="#3a5a1a" stroke-width="1"/><path d="M5 5l10 10M15 5L5 15" stroke="#d8dce4" stroke-width="2.6"/></svg>
<svg class="ic" style="left:1223.5px;top:66.5px;width:23px;height:23px" viewBox="0 0 20 20"><rect x="1.5" y="2" width="17" height="16" fill="#e8eefa" stroke="#2c4a90" stroke-width="1.4"/><rect x="1.5" y="2" width="17" height="4" fill="#3c62b8"/><path d="M5 9h3v3H5zM10 9h6M10 12h6M5 14h3v3H5z" stroke="#445" stroke-width="1" fill="#c8a040"/><path d="M16 8L9 16" stroke="#c02020" stroke-width="1.6"/></svg>
<svg class="ic" style="left:1249.5px;top:66.5px;width:23px;height:23px" viewBox="0 0 20 20"><rect x="2.5" y="3.5" width="15" height="14" fill="#eef2fa" stroke="#223" stroke-width="1.2" stroke-dasharray="2 1.4"/><path d="M6 12l8-6 3 2-7 7z" fill="#e0a040" stroke="#804000" stroke-width=".7"/><path d="M3 1l1 2 2 1-2 1-1 2-1-2-2-1 2-1z" fill="#f0d000"/></svg>
<svg class="ic" style="left:1275.5px;top:66.5px;width:23px;height:23px" viewBox="0 0 20 20"><path d="M3 16L7 3l11 1-3 13z" fill="#6a8ae0" stroke="#c03030" stroke-width="1.4"/><path d="M5 11.5l12-1M9 3.2L7 16.4M13.5 3.6L11 16.7" stroke="#f0c0c0" stroke-width=".8"/></svg>
<div class="grp" style="left:136px">属性/过滤器</div>
<div class="grp" style="left:427px">图形</div>
<div class="grp" style="left:730px">图像 (进阶)</div>
<div class="grp" style="left:955px">视图</div>
<div class="grp" style="left:1089px">工作平面</div>
<div class="grp" style="left:1223px">系统</div>
<div id="leftbar"><div class="hgrip" style="top:4px"></div><div class="hgrip" style="top:256px"></div></div>
<svg class="ic" style="left:7.0px;top:133.0px;width:22px;height:22px" viewBox="0 0 20 20"><circle cx="8" cy="8" r="5" fill="#dfe8f6" stroke="#7a8296" stroke-width="1.6"/><path d="M12 12l6 6" stroke="#8a8270" stroke-width="2.6"/></svg>
<svg class="ic" style="left:33.0px;top:133.0px;width:22px;height:22px" viewBox="0 0 20 20"><path d="M3 3l14 14M17 3L3 17" stroke="#3c6ad0" stroke-width="1.6"/><path d="M16 2L6 15l-2 3 3-1.5L17 4z" fill="#d09838" stroke="#704010" stroke-width=".8"/></svg>
<svg class="abs" style="left:47px;top:132px" width="6" height="4" viewBox="0 0 6 4"><path d="M0 0h6L3 3.5z" fill="#111"/></svg>
<svg class="ic" style="left:7.0px;top:159.0px;width:22px;height:22px" viewBox="0 0 20 20"><rect x="4.5" y="4.5" width="11" height="11" fill="#dfe9fa" stroke="#3a3f4a" stroke-width="1.1"/><rect x="5.5" y="5.5" width="5" height="4" fill="#f8fbff"/><path d="M1 1l4.6 1.2-3.4 3.4zM19 1l-4.600 1.2 3.4 3.4zM1 19l4.600-1.200-3.4-3.4zM19 19l-4.600-1.200 3.4-3.4z" fill="#30b830"/></svg>
<svg class="ic" style="left:33.0px;top:159.0px;width:22px;height:22px" viewBox="0 0 20 20"><path d="M3 8a4 4 0 1 1 6 4a4 4 0 1 0 6 4" stroke="#3c6ad0" stroke-width="1.8" fill="none"/><path d="M16 2L6 15l-2 3 3-1.5L17 4z" fill="#d09838" stroke="#704010" stroke-width=".8"/></svg>
<svg class="abs" style="left:47px;top:158px" width="6" height="4" viewBox="0 0 6 4"><path d="M0 0h6L3 3.5z" fill="#111"/></svg>
<svg class="ic" style="left:7.0px;top:185.0px;width:22px;height:22px" viewBox="0 0 20 20"><circle cx="9" cy="9" r="5" fill="#dfe8f6" stroke="#7a8296" stroke-width="1.6"/><path d="M13 13l5 5" stroke="#8a8270" stroke-width="2.6"/><path d="M1 3h5M3.5 .5v5" stroke="#222" stroke-width="1"/><rect x="12" y="12" width="6" height="6" fill="#777"/></svg>
<svg class="ic" style="left:33.0px;top:185.0px;width:22px;height:22px" viewBox="0 0 20 20"><rect x="2.5" y="4" width="13" height="13" fill="#f6f8e8" stroke="#e6dc00" stroke-width="1.8"/><path d="M5 10l4 5 8-12" stroke="#2aa52a" stroke-width="2.6" fill="none"/></svg>
<svg class="abs" style="left:21px;top:184px" width="6" height="4" viewBox="0 0 6 4"><path d="M0 0h6L3 3.5z" fill="#111"/></svg>
<svg class="abs" style="left:47px;top:184px" width="6" height="4" viewBox="0 0 6 4"><path d="M0 0h6L3 3.5z" fill="#111"/></svg>
<svg class="ic" style="left:7.0px;top:211.0px;width:22px;height:22px" viewBox="0 0 20 20"><path d="M2 12l8-4 8 4-8 5z" fill="#d8dcea" stroke="#8890a8" stroke-width=".7"/><path d="M7 12V2" stroke="#2060e0" stroke-width="1.6"/><path d="M7 12l9 5" stroke="#e02020" stroke-width="1.6"/><path d="M7 12l8-6" stroke="#20a020" stroke-width="1.6"/><path d="M7 0l-2.2 4h4.4z" fill="#2060e0"/><circle cx="7" cy="12" r="1.5" fill="#eee" stroke="#333" stroke-width=".6"/></svg>
<svg class="ic" style="left:33.0px;top:211.0px;width:22px;height:22px" viewBox="0 0 20 20"><path d="M2 8q4-8 8 2t8 2" stroke="#3c6ad0" stroke-width="1.8" fill="none"/><path d="M16 2L6 15l-2 3 3-1.5L17 4z" fill="#d09838" stroke="#704010" stroke-width=".8"/></svg>
<svg class="abs" style="left:21px;top:210px" width="6" height="4" viewBox="0 0 6 4"><path d="M0 0h6L3 3.5z" fill="#111"/></svg>
<svg class="abs" style="left:47px;top:210px" width="6" height="4" viewBox="0 0 6 4"><path d="M0 0h6L3 3.5z" fill="#111"/></svg>
<svg class="ic" style="left:7.0px;top:237.0px;width:22px;height:22px" viewBox="0 0 20 20"><path d="M3 3h10v2H3zM3 6h10v2H3z" fill="#5a70c8"/><ellipse cx="9" cy="14" rx="7" ry="4.5" fill="#d8b890" stroke="#7a5a3a" stroke-width=".8"/><circle cx="6" cy="14" r="1.3" fill="#e02020"/><circle cx="9.5" cy="15.5" r="1.3" fill="#20a020"/><circle cx="12.5" cy="13.5" r="1.3" fill="#2040e0"/><path d="M17 2L10 12" stroke="#a0521a" stroke-width="1.8"/></svg>
<svg class="ic" style="left:33.0px;top:237.0px;width:22px;height:22px" viewBox="0 0 20 20"><path d="M2 17L6 5l12-3-3 13z" fill="#5a8ae8" stroke="#2c4aa0" stroke-width="1"/><path d="M4 11l12-3M11 4L9 16" stroke="#d8e4fa" stroke-width="1"/></svg>
<svg class="abs" style="left:21px;top:236px" width="6" height="4" viewBox="0 0 6 4"><path d="M0 0h6L3 3.5z" fill="#111"/></svg>
<svg class="abs" style="left:47px;top:236px" width="6" height="4" viewBox="0 0 6 4"><path d="M0 0h6L3 3.5z" fill="#111"/></svg>
<svg class="ic" style="left:7.0px;top:263.0px;width:22px;height:22px" viewBox="0 0 20 20"><path d="M4 9A6 6 0 0 1 15 6L17 4V10H11L13.5 7.5A4 4 0 0 0 6.5 9Z" fill="#5b93d8"/><path d="M16 11A6 6 0 0 1 5 14L3 16V10H9L6.5 12.5A4 4 0 0 0 13.5 11Z" fill="#7fb0e8"/></svg>
<svg class="ic" style="left:33.0px;top:263.0px;width:22px;height:22px" viewBox="0 0 20 20"><path d="M2 6l8-3 8 3-8 3.5z" fill="#d8d8d8" stroke="#555" stroke-width=".6"/><path d="M2 6l8 3.5v8.5l-8-4z" fill="#a0a0a0" stroke="#555" stroke-width=".6"/><path d="M18 6l-8 3.5v8.5l8-4z" fill="#6c6c6c" stroke="#555" stroke-width=".6"/></svg>
<svg class="abs" style="left:21px;top:262px" width="6" height="4" viewBox="0 0 6 4"><path d="M0 0h6L3 3.5z" fill="#111"/></svg>
<svg class="abs" style="left:47px;top:262px" width="6" height="4" viewBox="0 0 6 4"><path d="M0 0h6L3 3.5z" fill="#111"/></svg>
<svg class="ic" style="left:7.0px;top:289.0px;width:22px;height:22px" viewBox="0 0 20 20"><text x="10" y="16" font-size="19" font-weight="bold" text-anchor="middle" fill="#3a68c8" font-family='Liberation Sans',sans-serif>?</text></svg>
<svg class="ic" style="left:33.0px;top:289.0px;width:22px;height:22px" viewBox="0 0 20 20"><path d="M3 6v12M17 6v12" stroke="#222" stroke-width="1.2"/><path d="M3 8h14" stroke="#d8c800" stroke-width="1.8"/><path d="M3 8l3-2v4zM17 8l-3-2v4z" fill="#d8c800"/></svg>
<svg class="abs" style="left:21px;top:288px" width="6" height="4" viewBox="0 0 6 4"><path d="M0 0h6L3 3.5z" fill="#111"/></svg>
<svg class="abs" style="left:47px;top:288px" width="6" height="4" viewBox="0 0 6 4"><path d="M0 0h6L3 3.5z" fill="#111"/></svg>
<svg class="ic" style="left:7.0px;top:315.0px;width:22px;height:22px" viewBox="0 0 20 20"><path d="M4 6h12l-1.5 12h-9z" fill="#b8dcf0" stroke="#4a88b0" stroke-width="1"/><ellipse cx="10" cy="6" rx="6" ry="1.8" fill="#dff0fa" stroke="#4a88b0" stroke-width="1"/><path d="M8 1l4 0-1 4h-2z" fill="#e8d020"/><path d="M7 9l1 7M10 9v7M13 9l-1 7" stroke="#6aa8c8" stroke-width=".8"/></svg>
<svg class="ic" style="left:33.0px;top:315.0px;width:22px;height:22px" viewBox="0 0 20 20"><path d="M3 9l6-6v4q8 0 8 8-3-4-8-4v4z" fill="#a4a8b0" stroke="#80848c" stroke-width=".6"/></svg>
<svg class="abs" style="left:21px;top:314px" width="6" height="4" viewBox="0 0 6 4"><path d="M0 0h6L3 3.5z" fill="#111"/></svg>
<svg class="abs" style="left:47px;top:314px" width="6" height="4" viewBox="0 0 6 4"><path d="M0 0h6L3 3.5z" fill="#111"/></svg>
<svg class="ic" style="left:7.0px;top:341.0px;width:22px;height:22px" viewBox="0 0 20 20"><circle cx="10" cy="10" r="6" fill="none" stroke="#b0601c" stroke-width="1.8"/><path d="M10 1v18M1 10h18M3.5 3.5l13 13M16.5 3.5l-13 13" stroke="#b0601c" stroke-width="1.2"/><path d="M2 2v12" stroke="#333" stroke-width="1.6"/><path d="M2 16l10 2-4-5z" fill="#f08020"/></svg>
<svg class="ic" style="left:33.0px;top:341.0px;width:22px;height:22px" viewBox="0 0 20 20"><path d="M2 6h6l2 2h7v9H2z" fill="#f0d070" stroke="#a88420" stroke-width=".8"/><rect x="8" y="10" width="10" height="8" fill="#f6f8fc" stroke="#333" stroke-width="1"/><path d="M9 3h6v4H9z" fill="#38a838"/></svg>
<svg class="abs" style="left:21px;top:340px" width="6" height="4" viewBox="0 0 6 4"><path d="M0 0h6L3 3.5z" fill="#111"/></svg>
<div id="vp">
<div class="vb" style="left:4px;top:4px"></div>
<div class="vb" style="left:32px;top:4px"></div>
<div class="vb" style="left:60px;top:4px"></div>
<div class="vb" style="left:88px;top:4px"></div>
<div class="vb" style="left:116px;top:4px"></div>
<div class="vb" style="left:144px;top:4px"></div>
<div class="vb" style="left:172px;top:4px"></div>
<div class="vb" style="left:200px;top:4px"></div>
<div class="vb" style="left:228px;top:4px"></div>
<div class="vb" style="left:256px;top:4px"></div>
<div class="vb" style="left:284px;top:4px"></div>
<div class="vb" style="left:4px;top:32px"></div>
<div class="vb" style="left:4px;top:60px"></div>
<div class="vb sel" style="left:4px;top:88px"></div>
<div class="vb" style="left:4px;top:116px"></div>
<div class="vb" style="left:4px;top:144px"></div>
</div>
<svg class="abs" style="left:60px;top:109px" width="1860" height="892" viewBox="60 109 1860 892" shape-rendering="crispEdges" font-family="'Liberation Sans','Noto Sans CJK SC',sans-serif">
<polygon points="350.5,680 493,672.5 620,664 764,658 830,668 773,712 548,716" fill="#7a7a8a" stroke="#000" stroke-width="0.9"/>
<polygon points="380,681 493,674.5 640,690 640,700 560,704" fill="#70707e" stroke="#000" stroke-width="0.6"/>
<polygon points="429,681.7 481.7,685.8 486.7,690 430,690.8" fill="#d2d2e8" stroke="#000" stroke-width="0.7"/>
<polygon points="468.3,691.7 515,691.7 516.7,696.7 468.3,696.7" fill="#d2d2e8" stroke="#000" stroke-width="0.7"/>
<polygon points="530,699.2 586.7,703.3 613.3,708.3 530,706.7" fill="#d2d2e8" stroke="#000" stroke-width="0.7"/>
<polygon points="564,708.3 613,706.7 623,710 564,712.5" fill="#d8d8ec" stroke="#000" stroke-width="0.7"/>
<polygon points="636.7,700 700,696 760,706 690,712 635,708.3" fill="#d2d2e8" stroke="#000" stroke-width="0.7"/>
<polygon points="515,669 621,664 700,678 690,686 560,680" fill="#8c8c9c" stroke="#000" stroke-width="0.6"/>
<polygon points="560,680 690,686 760,700 640,700" fill="#6e6e7c" stroke="#000" stroke-width="0.6"/>
<polygon points="620,676 700,690 772,702 772,712 690,700 610,686" fill="#6c6c78" stroke="#000" stroke-width="0.6"/>
<polyline points="352,681 548,716" fill="none" stroke="#000" stroke-width="1.6"/>
<polyline points="365,681.7 553,713" fill="none" stroke="#000" stroke-width="0.8"/>
<polyline points="548,716 773,712" fill="none" stroke="#000" stroke-width="1.4"/>
<polyline points="493,674 640,700" fill="none" stroke="#000" stroke-width="0.9"/>
<polygon points="620.8,662.7 763.5,657.5 987.5,693 946,703 900,707 773,700" fill="#5a5a5a" stroke="#000" stroke-width="0.9"/>
<polygon points="660,664 750,660 800,669 715,673" fill="#6e6e6e" stroke="#000" stroke-width="0.6"/>
<polygon points="715,673 800,669 860,680 770,685" fill="#4e4e4e" stroke="#000" stroke-width="0.6"/>
<polygon points="800,669 850,667 905,676 860,680" fill="#8a8a8a" stroke="#000" stroke-width="0.6"/>
<polygon points="770,685 860,680 915,690 830,696" fill="#747474" stroke="#000" stroke-width="0.6"/>
<polygon points="860,680 905,676 960,685 915,690" fill="#909090" stroke="#000" stroke-width="0.6"/>
<polygon points="830,696 915,690 975,697 900,704" fill="#666" stroke="#000" stroke-width="0.6"/>
<polygon points="743,715 780,712.5 936,737.5 936,750.5 780,727 743,720" fill="#74747f" stroke="#000" stroke-width="0.9"/>
<polygon points="773,700 900,705 946,703 946,708 880,712 773,706" fill="#8e8e9a" stroke="#000" stroke-width="0.6"/>
<polyline points="773,706 930,703" fill="none" stroke="#dcdce8" stroke-width="1.6"/>
<polygon points="537.5,143.2 558,144.2 515,668 493,672.5" fill="#7a7a8a" stroke="#000" stroke-width="0.9"/>
<polygon points="548.6,160 557,160 515,668 505.6,668" fill="#7c7c8c" stroke="#000" stroke-width="0.7"/>
<polygon points="524,431 533,431 531.4,451 522.4,451" fill="#7e7e8e" stroke="#000" stroke-width="0.6"/>
<polygon points="537.5,143.2 557.8,144.2 556.6,158.8 536.3,157.6" fill="#7a7a8a" stroke="#000" stroke-width="0.9"/>
<polyline points="546.6,160 503.6,668" fill="none" stroke="#000" stroke-width="0.7"/>
<polyline points="547.6,160 504.6,668" fill="none" stroke="#c8c8dc" stroke-width="0.8"/>
<polyline points="536,243 550,243.5" fill="none" stroke="#000" stroke-width="0.7"/>
<polygon points="537,262 546,262 541,325 532,325" fill="#2a2a2e"/>
<polyline points="537.7,266 545.2,265.5" fill="none" stroke="#e8e8f0" stroke-width="1.8"/>
<polyline points="537,273.5 544.5,273" fill="none" stroke="#e8e8f0" stroke-width="1.8"/>
<polyline points="536.4,281 543.9,280.5" fill="none" stroke="#e8e8f0" stroke-width="1.8"/>
<polyline points="535.8,288.5 543.3,288" fill="none" stroke="#e8e8f0" stroke-width="1.8"/>
<polyline points="535.2,296 542.7,295.5" fill="none" stroke="#e8e8f0" stroke-width="1.8"/>
<polyline points="534.6,303.5 542.1,303" fill="none" stroke="#e8e8f0" stroke-width="1.8"/>
<polyline points="533.9,311 541.4,310.5" fill="none" stroke="#e8e8f0" stroke-width="1.8"/>
<polyline points="533.3,318.5 540.8,318" fill="none" stroke="#e8e8f0" stroke-width="1.8"/>
<polygon points="394.5,150.5 537.5,143.2 493,672.5 350.5,680" fill="#d2d2e8" stroke="#000" stroke-width="1"/>
<polygon points="402.5,165 526.2,158 520,241.8 396.2,248" fill="#d2d2e8" stroke="#000" stroke-width="0.9"/>
<polygon points="404.5,167 524,160.2 518,239.6 398.4,245.8" fill="none" stroke="#000" stroke-width="0.6"/>
<g transform="rotate(4.5 425 205)"><path d="M413 190l4 3M437 190l-4 3M413 220l4 -3M437 220l-4 -3" stroke="#000" stroke-width="2.4"/><ellipse cx="425" cy="205" rx="11" ry="16.5" fill="#050505"/></g>
<g transform="rotate(4.5 496.8 200.5)"><path d="M484.8 185.5l4 3M508.8 185.5l-4 3M484.8 215.5l4 -3M508.8 215.5l-4 -3" stroke="#000" stroke-width="2.4"/><ellipse cx="496.8" cy="200.5" rx="11" ry="16.5" fill="#050505"/></g>
<polyline points="386.3,250 548.7,242.2" fill="none" stroke="#000" stroke-width="1"/>
<polyline points="385.9,252.6 528.5,245.4" fill="none" stroke="#000" stroke-width="0.6"/>
<polygon points="393.8,264.5 518,257.5 503.8,427 381.2,433.2" fill="#d2d2e8" stroke="#000" stroke-width="0.9"/>
<polygon points="395.8,266.6 516,259.8 502,425 383.4,431" fill="none" stroke="#000" stroke-width="0.6"/>
<g transform="rotate(4.7 398.8 348.8)"><rect x="392.8" y="333.8" width="12" height="30" rx="2.5" fill="#d2d2e8" stroke="#000" stroke-width="0.9"/><rect x="395.8" y="338.8" width="5.5" height="19" rx="1.5" fill="#e8e8f4" stroke="#000" stroke-width="0.8"/></g>
<g transform="rotate(4.7 498.8 342.5)"><rect x="492.8" y="327.5" width="12" height="30" rx="2.5" fill="#d2d2e8" stroke="#000" stroke-width="0.9"/><rect x="495.8" y="332.5" width="5.5" height="19" rx="1.5" fill="#70707c" stroke="#000" stroke-width="0.8"/></g>
<polyline points="395.5,250 360.9,666" fill="none" stroke="#000" stroke-width="0.7"/>
<polyline points="519,244 484.5,659" fill="none" stroke="#000" stroke-width="0.7"/>
<polygon points="379.5,449.5 502,443.2 484,657 362,662.5" fill="#d2d2e8" stroke="#000" stroke-width="0.9"/>
<polyline points="381.2,433.2 503.8,427" fill="none" stroke="#000" stroke-width="0.9"/>
<polyline points="440,447 423.5,660" fill="none" stroke="#000" stroke-width="0.8"/>
<polyline points="442.4,447 425.9,660" fill="none" stroke="#000" stroke-width="0.8"/>
<g transform="rotate(4.7 418 554.5)"><rect x="412" y="539.5" width="12" height="30" rx="2.5" fill="#d2d2e8" stroke="#000" stroke-width="0.9"/><rect x="415" y="544.5" width="5.5" height="19" rx="1.5" fill="#e8e8f4" stroke="#000" stroke-width="0.8"/></g>
<g transform="rotate(4.7 443.8 553.2)"><rect x="437.8" y="538.2" width="12" height="30" rx="2.5" fill="#d2d2e8" stroke="#000" stroke-width="0.9"/><rect x="440.8" y="543.2" width="5.5" height="19" rx="1.5" fill="#70707c" stroke="#000" stroke-width="0.8"/></g>
<polyline points="351.6,666.2 493.5,658.8" fill="none" stroke="#000" stroke-width="0.9"/>
<polygon points="558.8,140 532.9,452 535.4,452 561.3,139.9" fill="#b09890" stroke="#000" stroke-width="0.7"/>
<polygon points="561.3,139.9 535.4,452 537.9,452 563.9,139.7" fill="#8a7670" stroke="#000" stroke-width="0.7"/>
<polygon points="563.9,139.7 537.9,452 540.5,452 566.4,139.6" fill="#c8aca6" stroke="#000" stroke-width="0.7"/>
<polygon points="566.4,139.6 641,136.4 616.7,448 540.5,452" fill="#c3a5a3" stroke="#000" stroke-width="0.9"/>
<polygon points="566,139.6 641,136.4 640.8,140 565.8,143.2" fill="#c8aca8" stroke="#000" stroke-width="0.6"/>
<polygon points="566,143.2 641,140 640.8,143.6 565.8,146.8" fill="#b89c98" stroke="#000" stroke-width="0.6"/>
<polygon points="566,146.8 641,143.6 640.8,147.2 565.8,150.4" fill="#c8aca8" stroke="#000" stroke-width="0.6"/>
<polygon points="641,136.4 616.7,448 619.9,448 644.4,136.2" fill="#b09890" stroke="#000" stroke-width="0.7"/>
<polygon points="644.4,136.2 619.9,448 623.2,448 647.7,136.1" fill="#3c3230" stroke="#000" stroke-width="0.7"/>
<polygon points="647.7,136.1 623.2,448 626.5,448 651.1,135.9" fill="#c8aca6" stroke="#000" stroke-width="0.7"/>
<polygon points="651.1,135.9 626.5,448 629.7,448 654.4,135.7" fill="#6e5c58" stroke="#000" stroke-width="0.7"/>
<polygon points="654.4,135.7 629.7,448 633,448 657.8,135.5" fill="#b89e98" stroke="#000" stroke-width="0.7"/>
<polygon points="657.8,135.5 633,448 636.2,448 661.1,135.4" fill="#3c3230" stroke="#000" stroke-width="0.7"/>
<polygon points="661.1,135.4 636.2,448 639.5,448 664.5,135.2" fill="#c0a49e" stroke="#000" stroke-width="0.7"/>
<polygon points="657.5,172 664,171.6 641.3,448 634.9,448" fill="#a2a2b6" stroke="#000" stroke-width="0.6"/>
<polygon points="655.5,150 664,149.6 663,171.6 654.5,172" fill="#6e6262" stroke="#000" stroke-width="0.5"/>
<polygon points="568.8,159.5 637.5,155 631.2,237.5 562,243" fill="#1c7ec0" stroke="#000" stroke-width="1"/>
<polygon points="571.4,162.2 634.6,158 628.8,234.8 565,239.8" fill="none" stroke="#000" stroke-width="0.7" stroke-dasharray="3 2"/>
<polygon points="575.5,168.8 628.8,165.5 623.8,229.2 570,233" fill="#00ffff" stroke="#000" stroke-width="1"/>
<text x="600" y="211" font-size="15" font-weight="900" font-style="italic" text-anchor="middle" fill="#000" transform="translate(600 205) rotate(-3) skewX(-3) scale(.55 1.45) translate(-600 -205)" textLength="48" lengthAdjust="spacingAndGlyphs">显示器</text>
<ellipse cx="566.4" cy="269.2" rx="4" ry="4.6" fill="#c8c8c8" stroke="#000" stroke-width="0.7"/>
<ellipse cx="564.8" cy="268.8" rx="3.4" ry="4.2" fill="#1ec81e" stroke="#000" stroke-width="0.7"/>
<ellipse cx="584.2" cy="267.9" rx="4" ry="4.6" fill="#c8c8c8" stroke="#000" stroke-width="0.7"/>
<ellipse cx="582.6" cy="267.5" rx="3.4" ry="4.2" fill="#f0e010" stroke="#000" stroke-width="0.7"/>
<ellipse cx="601.6" cy="266.6" rx="4" ry="4.6" fill="#c8c8c8" stroke="#000" stroke-width="0.7"/>
<ellipse cx="600" cy="266.2" rx="3.4" ry="4.2" fill="#d01010" stroke="#000" stroke-width="0.7"/>
<ellipse cx="618.6" cy="265.4" rx="4" ry="4.8" fill="#c8c8c8" stroke="#000" stroke-width="0.7"/>
<ellipse cx="615.8" cy="264.6" rx="3.8" ry="5.6" fill="#d01010" stroke="#000" stroke-width="0.7"/>
<polygon points="622.5,448.5 637,447.5 621.3,663.8 607,665" fill="#7c7c8a" stroke="#000" stroke-width="0.9"/>
<polygon points="532.5,452 623.9,448 607.3,665 514.6,669" fill="#d2d2e8" stroke="#000" stroke-width="0.9"/>
<polyline points="532.2,457 623.5,453" fill="none" stroke="#000" stroke-width="0.8"/>
<polyline points="540,457 522.5,668" fill="none" stroke="#000" stroke-width="0.7"/>
<polyline points="613.8,453.5 596.2,665" fill="none" stroke="#000" stroke-width="0.7"/>
<polygon points="540,471.5 613,467.8 598.6,650.2 525.2,653.8" fill="#c3a5a3" stroke="#000" stroke-width="0.9"/>
<polygon points="805,126.2 1033.8,165 990,680.4 763.5,642" fill="#868686" stroke="#000" stroke-width="0.9"/>
<polygon points="817,142.5 1021,177 1015,260 810,228.8" fill="#696969" stroke="#000" stroke-width="0.9"/>
<polygon points="817,144 1011,176 1010.5,181 905,170 817,150" fill="#3e3e3e" stroke="#000" stroke-width="0.6"/>
<polygon points="817,151.4 866,153.6 866,156.6 817,155" fill="#dcdcf0" stroke="#000" stroke-width="0.4"/>
<polygon points="817,156 868,158 906,162.5 890,172.5 817,161" fill="#424242" stroke="#000" stroke-width="0.6"/>
<polygon points="890,172.5 906,162.5 968,169.5 1010,176.5 899,187" fill="#6a6a6a" stroke="#000" stroke-width="0.6"/>
<polygon points="911,162 930,164.6 928,167.6 909,165.2" fill="#d0b0aa" stroke="#000" stroke-width="0.4"/>
<polyline points="816,161.5 891,173.5" fill="none" stroke="#000" stroke-width="1.2"/>
<polygon points="815,174 845,176 844,215.5 810.8,226" fill="#6a6a6a" stroke="#000" stroke-width="0.6"/>
<polygon points="845.8,175.8 892.4,182.7 890,223 844.3,215.5" fill="#4c4c4c" stroke="#000" stroke-width="0.9"/>
<polygon points="838.5,177 844.5,175.6 843.8,215.2 837.5,214" fill="#8c1212" stroke="#000" stroke-width="0.7"/>
<polygon points="899.2,187.3 1013,178 1006,259.8 895.4,240" fill="#888" stroke="#000" stroke-width="0.9"/>
<polygon points="892.4,183 899.2,187.3 895.4,240 890,238" fill="#5e5e5e" stroke="#000" stroke-width="0.6"/>
<polyline points="875.5,224 874.5,238" fill="none" stroke="#c8c8d4" stroke-width="1.6"/>
<polyline points="881,225 880,239" fill="none" stroke="#c8c8d4" stroke-width="1.2"/>
<g transform="rotate(5 919 226.5)"><rect x="913" y="209.5" width="21" height="34" fill="#5a5a62" stroke="#000" stroke-width=".8"/><rect x="904" y="209.5" width="22" height="34" fill="#c4c4cc" stroke="#000" stroke-width=".8"/><rect x="905" y="210.5" width="20" height="32" fill="none" stroke="#f4f4f8" stroke-width="1.2" stroke-dasharray="1.5 1.5"/><ellipse cx="916" cy="226.5" rx="10" ry="14.5" fill="#7a1818" stroke="#000" stroke-width=".7"/><path d="M909 217.5l7 -6 5 4zM920 232.5l5 -3 1 8z" fill="#d03030"/><ellipse cx="922" cy="229.5" rx="5" ry="9" fill="#4a4a52"/><ellipse cx="914" cy="225.5" rx="5.6" ry="8.4" fill="#c0c0de" stroke="#333" stroke-width=".6"/></g>
<g transform="rotate(5 990 222.5)"><rect x="984" y="205.5" width="21" height="34" fill="#5a5a62" stroke="#000" stroke-width=".8"/><rect x="975" y="205.5" width="22" height="34" fill="#c4c4cc" stroke="#000" stroke-width=".8"/><rect x="976" y="206.5" width="20" height="32" fill="none" stroke="#f4f4f8" stroke-width="1.2" stroke-dasharray="1.5 1.5"/><ellipse cx="987" cy="222.5" rx="10" ry="14.5" fill="#7a1818" stroke="#000" stroke-width=".7"/><path d="M980 213.5l7 -6 5 4zM991 228.5l5 -3 1 8z" fill="#d03030"/><ellipse cx="993" cy="225.5" rx="5" ry="9" fill="#4a4a52"/><ellipse cx="985" cy="221.5" rx="5.6" ry="8.4" fill="#c0c0de" stroke="#333" stroke-width=".6"/></g>
<polygon points="943.5,231 955,232.5 954,244 942.5,242.5" fill="#2c2c2c" stroke="#000" stroke-width="0.6"/>
<polyline points="948,233 947.4,242" fill="none" stroke="#2a8a2a" stroke-width="1.4"/>
<ellipse cx="958" cy="238" rx="2.6" ry="2.9" fill="#5a1a1a" stroke="#000" stroke-width="0.6"/>
<ellipse cx="965" cy="238.6" rx="3.2" ry="3.6" fill="#18b018" stroke="#000" stroke-width="0.6"/>
<ellipse cx="974.8" cy="240.7" rx="3.6" ry="4" fill="#b01414" stroke="#000" stroke-width="0.6"/>
<ellipse cx="985.5" cy="242.2" rx="3.2" ry="3.6" fill="#d8c818" stroke="#000" stroke-width="0.6"/>
<ellipse cx="995.4" cy="243.7" rx="5.2" ry="5.8" fill="#c81010" stroke="#000" stroke-width="0.6"/>
<polygon points="810,228.8 1015,260 1013.8,276.2 807.5,242.5" fill="#6c6c6c" stroke="#000" stroke-width="0.9"/>
<polygon points="807,244 882,258 872,440 792,430" fill="#6c6c84"/>
<polygon points="808,243 1012,276.5 1011,287 806.5,256" fill="#3c3c3c" stroke="#000" stroke-width="0.6"/>
<polygon points="818,252 832,254 832,262 818,260" fill="#8a8a92" stroke="#000" stroke-width="0.4"/>
<polygon points="831,256 868,262 869,268.4 832,262.4" fill="#1f6f1f" stroke="#000" stroke-width="0.5"/>
<polyline points="833,259 867,265" fill="none" stroke="#0c3c0c" stroke-width="1.2" stroke-dasharray="2 2"/>
<polygon points="866,260.8 884.6,263.6 884,267.6 878,267.2 877,272 870.6,271 871,266.6 866,265.6" fill="#e4e4f4" stroke="#000" stroke-width="0.4"/>
<polygon points="884,264 894,265.6 894,273 884,271" fill="#8a8a92" stroke="#000" stroke-width="0.4"/>
<polygon points="893.8,268.3 930.5,274.2 931,280.6 894.4,274.6" fill="#1f6f1f" stroke="#000" stroke-width="0.5"/>
<polyline points="896,271.4 929,277" fill="none" stroke="#0c3c0c" stroke-width="1.2" stroke-dasharray="2 2"/>
<polygon points="929,272.6 947.6,275.4 947,279.6 941,279 940,284 933.6,283 934,278.6 929,277.6" fill="#e4e4f4" stroke="#000" stroke-width="0.4"/>
<polygon points="947,276 958,277.8 958,284 947,282" fill="#8a8a92" stroke="#000" stroke-width="0.4"/>
<polygon points="806.5,256 816,258 811,315 801.5,313" fill="#3a3a44"/>
<polyline points="806.5,262 814.9,262.6" fill="none" stroke="#d8d8e8" stroke-width="2"/>
<polyline points="805.9,269.6 814.3,270.2" fill="none" stroke="#d8d8e8" stroke-width="2"/>
<polyline points="805.2,277.2 813.6,277.8" fill="none" stroke="#d8d8e8" stroke-width="2"/>
<polyline points="804.6,284.8 813,285.4" fill="none" stroke="#d8d8e8" stroke-width="2"/>
<polyline points="804,292.4 812.4,293" fill="none" stroke="#d8d8e8" stroke-width="2"/>
<polyline points="803.3,300 811.7,300.6" fill="none" stroke="#d8d8e8" stroke-width="2"/>
<polyline points="802.7,307.6 811.1,308.2" fill="none" stroke="#d8d8e8" stroke-width="2"/>
<polygon points="881.6,274.5 993,292.8 993,306.5 881.6,288" fill="#55556c" stroke="#000" stroke-width="0.7"/>
<polyline points="882,278.6 993,296.8" fill="none" stroke="#000" stroke-width="0.7"/>
<polyline points="882,282.4 993,300.6" fill="none" stroke="#8c8ca8" stroke-width="1.3"/>
<polyline points="882,285.4 993,303.6" fill="none" stroke="#000" stroke-width="0.6"/>
<polygon points="950.3,282.6 958,284 957.6,311 949.8,309.6" fill="#70708a" stroke="#000" stroke-width="0.7"/>
<polygon points="1003.7,279.6 1011.4,280.8 1010,296 1002.4,295" fill="#a8a8c0" stroke="#000" stroke-width="0.6"/>
<polygon points="816.7,263.7 881.6,272.9 872.4,395 806,381.3" fill="#6b6b82" stroke="#000" stroke-width="0.9"/>
<polygon points="897,292.8 912,295 911,302 896,300" fill="#2c9a2c" stroke="#000" stroke-width="0.5"/>
<polygon points="880.6,300 906,303.6 905.4,309.4 880,306" fill="#2a8a2a" stroke="#000" stroke-width="0.5"/>
<polygon points="885,291 896,292.6 895.4,299 884.4,297.6" fill="#a8a8b0" stroke="#000" stroke-width="0.4"/>
<polygon points="880,309.4 944,306.6 944.6,311.6 880.4,314.4" fill="#dcdcec" stroke="#000" stroke-width="0.6"/>
<polygon points="925,296 944,298.6 944,306.6 925,307.4" fill="#909098" stroke="#000" stroke-width="0.4"/>
<polyline points="925,296 925,308" fill="none" stroke="#e4e4f0" stroke-width="1.2"/>
<polygon points="960,306.5 970,307.3 969.4,328.6 959.4,327.8" fill="#2c9c2c" stroke="#000" stroke-width="0.6"/>
<polygon points="970,307.3 979.3,308 978.7,329.4 969.4,328.6" fill="#1f6c1f" stroke="#000" stroke-width="0.6"/>
<polygon points="959.5,303 976,304.4 976,307.6 959.5,306.4" fill="#d8d8e8" stroke="#000" stroke-width="0.4"/>
<polygon points="881.6,315.6 927.4,313.6 925,356.9 879.4,358.6" fill="#8e8e90" stroke="#000" stroke-width="0.7"/>
<polyline points="908,315 905.6,357.6" fill="none" stroke="#e0e0ec" stroke-width="1.4"/>
<polygon points="878.4,319 882.4,319 881.6,331 877.6,331" fill="#2a9a2a" stroke="#000" stroke-width="0.4"/>
<g transform="rotate(5 889.2 336.6)"><rect x="883.2" y="321.6" width="12" height="30" rx="2.5" fill="#8a7a74" stroke="#000" stroke-width="0.9"/><rect x="886.2" y="326.6" width="5.5" height="19" rx="1.5" fill="#d8c0ba" stroke="#000" stroke-width="0.8"/></g>
<g transform="rotate(5 922 341.5)"><rect x="915.5" y="326" width="13" height="31" rx="2.5" fill="#8a7a74" stroke="#000" stroke-width="0.9"/><rect x="918.5" y="331" width="6.5" height="20" rx="1.5" fill="#e0c4be" stroke="#000" stroke-width="0.8"/></g>
<polygon points="889,355.4 924,354 924.4,358.8 889.4,360.2" fill="#dcdcec" stroke="#000" stroke-width="0.6"/>
<polygon points="894,360.7 900,360.7 898,384.4 892,384.4" fill="#c8aaa4" stroke="#000" stroke-width="0.7"/>
<polyline points="897,361 895,384" fill="none" stroke="#000" stroke-width="0.6"/>
<polyline points="1000.7,290 984,640" fill="none" stroke="#000" stroke-width="0.9"/>
<polygon points="990.4,355 997,355 995.6,376.7 989,376.7" fill="#c8aaa4" stroke="#000" stroke-width="0.7"/>
<polyline points="993.8,356 992.4,376" fill="none" stroke="#000" stroke-width="0.6"/>
<polygon points="991,413 999,414 997.6,434 989.6,433" fill="#70708a" stroke="#000" stroke-width="0.7"/>
<polyline points="896.7,455.6 989.8,448.8" fill="none" stroke="#000" stroke-width="1.6"/>
<polyline points="896.7,470 988.3,464" fill="none" stroke="#000" stroke-width="2.2"/>
<polyline points="935.6,472.4 920.5,650" fill="none" stroke="#2e2e2e" stroke-width="2.4"/>
<polyline points="938.2,472.4 923.1,650" fill="none" stroke="#5a5a5a" stroke-width="0.8"/>
<polygon points="923.4,467.9 935.6,467 936,472.6 923.8,473.4" fill="#c4c4dc" stroke="#000" stroke-width="0.5"/>
<g transform="rotate(6 916 576)"><rect x="912" y="565" width="8" height="22" rx="2.5" fill="#b8a09c" stroke="#000" stroke-width="0.9"/><rect x="915" y="570" width="1.5" height="11" rx="1.5" fill="#8a7a76" stroke="#000" stroke-width="0.8"/></g>
<g transform="rotate(6 940 574)"><rect x="936" y="563" width="8" height="22" rx="2.5" fill="#b8a09c" stroke="#000" stroke-width="0.9"/><rect x="939" y="568" width="1.5" height="11" rx="1.5" fill="#d8c0bc" stroke="#000" stroke-width="0.8"/></g>
<polygon points="917,655 924,655 924,663 917,663" fill="#c4c4dc" stroke="#000" stroke-width="0.6"/>
<polygon points="940,652 948,652 948,668 940,668" fill="#c4c4dc" stroke="#000" stroke-width="0.6"/>
<polygon points="877,404 927,402 927.6,408 877.6,410" fill="#c4c4dc" stroke="#000" stroke-width="0.6"/>
<polygon points="796,384 862,392 858,436 792,428" fill="#62627a" stroke="#000" stroke-width="0.5"/>
<polygon points="812,388 848,392 848,398 812,394" fill="#eeeef8" stroke="#000" stroke-width="0.4"/>
<polygon points="800,398 842,403 842,409 800,405" fill="#1e1e22" stroke="#000" stroke-width="0.4"/>
<polygon points="806,410 830,413 830,419 806,416" fill="#f4f4fc" stroke="#000" stroke-width="0.4"/>
<polygon points="833,396 842,397 841,412 832,411" fill="#e8e8f4" stroke="#000" stroke-width="0.4"/>
<polygon points="850,395 862,396.6 861,400 849,398.6" fill="#e07070" stroke="#000" stroke-width="0.3"/>
<polyline points="796,405 858,412" fill="none" stroke="#111" stroke-width="1.6"/>
<polyline points="800,420 868,427" fill="none" stroke="#111" stroke-width="1.4"/>
<polygon points="831,417 839,418 839,421 831,420" fill="#1c6c9c" stroke="#000" stroke-width="0.3"/>
<polygon points="877,404.4 928.8,403.7 929,409 905,410 877.4,410.6" fill="#d4d4e8" stroke="#000" stroke-width="0.6"/>
<polyline points="879,410 877.6,420" fill="none" stroke="#e4e4f0" stroke-width="1.8"/>
<polyline points="925,409 923.6,420" fill="none" stroke="#e4e4f0" stroke-width="1.8"/>
<polygon points="903,405 928.8,403.7 929,408.4 903,409.6" fill="#62627a" stroke="#000" stroke-width="0.5"/>
<polygon points="855.5,419 946,426 953,430 950,434 856,425" fill="#5a5a6e" stroke="#000" stroke-width="0.6"/>
<polyline points="860,423 948,430" fill="none" stroke="#c8c8dc" stroke-width="1.2"/>
<polygon points="893,430.4 944,434 942,437.6 892,434" fill="#8a8aa0" stroke="#000" stroke-width="0.5"/>
<polygon points="867,430 878,431 873,500 862,499" fill="#5a5a6a" stroke="#000" stroke-width="0.5"/>
<polygon points="851,512 878,514 871.5,636 844.5,634" fill="#6a6a82" stroke="#000" stroke-width="0.5"/>
<polygon points="861,514 869,514.6 862.5,636 854.5,635.4" fill="#34343c"/>
<polygon points="846,588 872,590 871.6,596 845.6,594" fill="#55556a" stroke="#000" stroke-width="0.5"/>
<polygon points="845,612 858,613 857,628 844,627" fill="#60607a" stroke="#000" stroke-width="0.5"/>
<polygon points="837,420.5 854,421.5 842.3,640 825.3,640" fill="#26262c" stroke="#000" stroke-width="0.6"/>
<polyline points="840,423.5 828.4,638" fill="none" stroke="#ececf6" stroke-width="1.7" stroke-dasharray="1.5 2.2"/>
<polyline points="850.5,423.5 838.9,638" fill="none" stroke="#ececf6" stroke-width="1.7" stroke-dasharray="1.5 2.2"/>
<polyline points="845.5,422.5 833.8,639" fill="none" stroke="#6e6e80" stroke-width="2.2"/>
<polygon points="881.5,426.6 898,427.6 886.6,640 870.1,640" fill="#26262c" stroke="#000" stroke-width="0.6"/>
<polyline points="884.5,429.6 873.2,638" fill="none" stroke="#ececf6" stroke-width="1.7" stroke-dasharray="1.5 2.2"/>
<polyline points="894.5,429.6 883.2,638" fill="none" stroke="#ececf6" stroke-width="1.7" stroke-dasharray="1.5 2.2"/>
<polyline points="889.8,428.6 878.4,639" fill="none" stroke="#6e6e80" stroke-width="2.2"/>
<polygon points="789.5,440 793,440 781,640 777.5,640" fill="#a4a4c4" stroke="#000" stroke-width="0.4"/>
<polygon points="793,440 803,441 791.1,640 781,640" fill="#26262c" stroke="#000" stroke-width="0.5"/>
<polyline points="795.5,444 783.9,638" fill="none" stroke="#ececf6" stroke-width="1.6" stroke-dasharray="1.5 2.2"/>
<polyline points="800.5,444 788.9,638" fill="none" stroke="#ececf6" stroke-width="1.4" stroke-dasharray="1.5 2.2"/>
<polygon points="851.5,490 863.5,491 862,512.5 850,511.5" fill="#266a26" stroke="#000" stroke-width="0.6"/>
<polyline points="854,491 852.6,511" fill="none" stroke="#3cae3c" stroke-width="1.4"/>
<polygon points="853,514 863,515 861.6,532 851.6,531" fill="#b4b4cc" stroke="#000" stroke-width="0.5"/>
<polygon points="847,538 854.5,538 848,606 840.5,606" fill="#ececf4" stroke="#000" stroke-width="0.6"/>
<polygon points="843,606 850,606 849,618 842,618" fill="#8a8a9a" stroke="#000" stroke-width="0.5"/>
<polygon points="786.8,487.7 831,493.6 830,502 797,527.4 784.6,528.6" fill="#c8c8e0" stroke="#000" stroke-width="0.8"/>
<polygon points="796,499 820.6,502.4 797.6,519.4" fill="#858585" stroke="#000" stroke-width="0.7"/>
<polygon points="787,477 838,484 838,488.4 787,481.6" fill="#8e8ea0" stroke="#000" stroke-width="0.5"/>
<ellipse cx="795.5" cy="484.5" rx="1.4" ry="1" fill="#f0e020"/>
<polygon points="896.7,497 964,503.6 965.4,507.6 898,501.4" fill="#60607a" stroke="#000" stroke-width="0.6"/>
<polyline points="899,499.4 962,505.4" fill="none" stroke="#b8b8cc" stroke-width="1"/>
<polygon points="893,492 903,492.6 903,497 893,496.4" fill="#b0b0c4" stroke="#000" stroke-width="0.4"/>
<polygon points="776,634 812,639 812,646 776,641" fill="#9c9cc0" stroke="#000" stroke-width="0.6"/>
<polygon points="812,632 822,633 822,650 812,649" fill="#a8a8cc" stroke="#000" stroke-width="0.6"/>
<polygon points="822,636 884,644 884,649 822,641" fill="#55556a" stroke="#000" stroke-width="0.6"/>
<polygon points="822,640 884,648 884,654 822,646" fill="#5c5c68" stroke="#000" stroke-width="0.6"/>
<polygon points="812,632 818,632 818,648 812,648" fill="#d0d0e0" stroke="#000" stroke-width="0.5"/>
<polygon points="790,636 800,637.6 800,641 790,639.4" fill="#e4e4f0" stroke="#000" stroke-width="0.4"/>
<polygon points="805,126.2 817,142.5 778,642 763.5,642" fill="#5e5e5e" stroke="#000" stroke-width="0.9"/>
<polygon points="805,126.2 1033.8,165 1021,177 817,142.5" fill="#6c6c6c" stroke="#000" stroke-width="0.9"/>
<polygon points="1021,177 1033.8,165 990,680.4 977.2,678" fill="#575757" stroke="#000" stroke-width="0.9"/>
<polygon points="1021,177 1033.8,165 1025.2,266 1013.6,262" fill="#6c6c6c" stroke="#000" stroke-width="0.9"/>
<polyline points="1013,180 984,520" fill="none" stroke="#000" stroke-width="0.6"/>
<polygon points="763.5,641.9 989.6,680.4 987.5,693 763.5,657.5" fill="#505050" stroke="#000" stroke-width="0.9"/>
<polygon points="664.5,135 805,126.2 763.5,657.5 620.8,662.7" fill="#848484" stroke="#000" stroke-width="1"/>
<polygon points="796.5,126.8 805,126.2 763.5,657.5 755.5,657.8" fill="#7a7a7a" stroke="#000" stroke-width="0.7"/>
<polygon points="673.8,148.8 796.2,142 790,225 667.5,231.8" fill="#848484" stroke="#000" stroke-width="0.9"/>
<polygon points="675.8,150.8 794,144.2 788,223 669.8,229.6" fill="none" stroke="#000" stroke-width="0.6"/>
<g transform="rotate(4.5 695.5 188.8)"><path d="M683.5 173.8l4 3M707.5 173.8l-4 3M683.5 203.8l4 -3M707.5 203.8l-4 -3" stroke="#000" stroke-width="2.4"/><ellipse cx="695.5" cy="188.8" rx="11" ry="16.5" fill="#050505"/></g>
<g transform="rotate(4.5 766.2 185)"><path d="M754.2 170l4 3M778.2 170l-4 3M754.2 200l4 -3M778.2 200l-4 -3" stroke="#000" stroke-width="2.4"/><ellipse cx="766.2" cy="185" rx="11" ry="16.5" fill="#050505"/></g>
<polyline points="656.3,235 797,226.8" fill="none" stroke="#000" stroke-width="1"/>
<polyline points="656,237.6 797,229.4" fill="none" stroke="#000" stroke-width="0.6"/>
<polygon points="664.5,248.8 787.5,241.2 773.8,410.8 650,415.8" fill="#848484" stroke="#000" stroke-width="0.9"/>
<polygon points="666.6,251 785.4,243.6 771.8,408.6 652.2,413.6" fill="none" stroke="#000" stroke-width="0.6"/>
<g transform="rotate(4.7 669.5 332.5)"><rect x="663.5" y="317.5" width="12" height="30" rx="2.5" fill="#c0a8a4" stroke="#000" stroke-width="0.9"/><rect x="666.5" y="322.5" width="5.5" height="19" rx="1.5" fill="#a89490" stroke="#000" stroke-width="0.8"/></g>
<g transform="rotate(4.7 768.8 327)"><rect x="762.3" y="311" width="13" height="32" rx="2.5" fill="#f0e020" stroke="#000" stroke-width="0.9"/><rect x="765.3" y="316" width="6.5" height="21" rx="1.5" fill="#8a8a60" stroke="#000" stroke-width="0.8"/></g>
<polyline points="655,250 622,648" fill="none" stroke="#000" stroke-width="0.7"/>
<polyline points="790,242 756.8,642" fill="none" stroke="#000" stroke-width="0.7"/>
<polygon points="648.8,433.2 772.5,427 756.2,640.8 632.3,647" fill="#848484" stroke="#000" stroke-width="0.9"/>
<polyline points="710,430 694.5,644" fill="none" stroke="#000" stroke-width="0.8"/>
<polyline points="712.4,430 696.9,644" fill="none" stroke="#000" stroke-width="0.8"/>
<g transform="rotate(4.7 688.8 539.5)"><rect x="682.8" y="524.5" width="12" height="30" rx="2.5" fill="#c0a8a4" stroke="#000" stroke-width="0.9"/><rect x="685.8" y="529.5" width="5.5" height="19" rx="1.5" fill="#d8c4c0" stroke="#000" stroke-width="0.8"/></g>
<g transform="rotate(4.7 713.8 537)"><rect x="707.8" y="522" width="12" height="30" rx="2.5" fill="#c0a8a4" stroke="#000" stroke-width="0.9"/><rect x="710.8" y="527" width="5.5" height="19" rx="1.5" fill="#8a7a76" stroke="#000" stroke-width="0.8"/></g>
<polyline points="621.8,649 763.5,642" fill="none" stroke="#000" stroke-width="0.9"/>
<polygon points="1034.5,168 1275,216 1247,515 1008,478" fill="#b4b4dc"/>
<polygon points="1058.8,181.2 1272.5,217.5 1271,226 1058.8,190" fill="#6e6e88" stroke="#000" stroke-width="0.6"/>
<polygon points="1058.8,190 1153.8,203.8 1152.5,212.5 1058.8,201.2" fill="#4a3c3a" stroke="#000" stroke-width="0.6"/>
<polygon points="1058.8,201.2 1152.5,212.5 1146.1,214.9 1058.1,204.4" fill="#b09088" stroke="#000" stroke-width="0.7"/>
<polygon points="1058.1,204.4 1146.1,214.9 1139.8,217.2 1057.4,207.6" fill="#5a4a46" stroke="#000" stroke-width="0.7"/>
<polygon points="1057.4,207.6 1139.8,217.2 1133.4,219.6 1056.7,210.8" fill="#c4a49c" stroke="#000" stroke-width="0.7"/>
<polygon points="1056.7,210.8 1133.4,219.6 1127,222 1056,214" fill="#6a5852" stroke="#000" stroke-width="0.7"/>
<polygon points="1032,212 1127,216 1126.7,220.3 1031.7,216.7" fill="#c4a49c" stroke="#000" stroke-width="0.7"/>
<polygon points="1031.7,216.7 1126.7,220.3 1126.3,224.7 1031.3,221.3" fill="#6a5852" stroke="#000" stroke-width="0.7"/>
<polygon points="1031.3,221.3 1126.3,224.7 1126,229 1031,226" fill="#c8a8a0" stroke="#000" stroke-width="0.7"/>
<polygon points="1127.5,213 1265,222.5 1264,231 1127,224" fill="#c4a49c" stroke="#000" stroke-width="0.6"/>
<polygon points="1170,204 1271,219 1270,223 1170,209" fill="#5a5a72" stroke="#000" stroke-width="0.5"/>
<polyline points="1058,236 1118,232 1104,470" fill="none" stroke="#000" stroke-width="0.8"/>
<polyline points="1058,236 1040,470" fill="none" stroke="#000" stroke-width="0.8"/>
<polyline points="1133,231 1152,228" fill="none" stroke="#000" stroke-width="0.8"/>
<polyline points="1170,228 1200,224 1210,232 1262,228" fill="none" stroke="#000" stroke-width="0.8"/>
<polygon points="1120,225 1105,480 1108.7,480 1123.7,225" fill="#a88c82" stroke="#000" stroke-width="0.7"/>
<polygon points="1123.7,225 1108.7,480 1112.3,480 1127.3,225" fill="#4a3c3a" stroke="#000" stroke-width="0.7"/>
<polygon points="1127.3,225 1112.3,480 1116,480 1131,225" fill="#c0a098" stroke="#000" stroke-width="0.7"/>
<polyline points="1197.1,226 1198.6,230 1196.6,234 1198.1,238 1196,242 1197.6,246 1195.5,250 1197.1,254 1195,258 1196.5,262 1194.5,266 1196,270 1193.9,274 1195.5,278 1193.4,282 1194.9,286 1192.9,290 1194.4,294 1192.3,298 1193.9,302 1191.8,306 1193.4,310 1191.3,314 1192.8,318 1190.8,322 1192.3,326 1190.2,330 1191.8,334 1189.7,338 1191.2,342 1189.2,346 1190.7,350 1188.7,354 1190.2,358 1188.1,362 1189.7,366 1187.6,370 1189.1,374 1187.1,378 1188.6,382 1186.5,386 1188.1,390 1186,394 1187.5,398 1185.5,402 1187,406 1185,410 1186.5,414 1184.4,418 1186,422 1183.9,426 1185.4,430 1183.4,434 1184.9,438 1182.8,442 1184.4,446 1182.3,450 1183.9,454 1181.8,458 1183.3,462 1181.3,466 1182.8,470 1180.7,474 1182.3,478 1180.2,482 1181.7,486 1179.7,490 1181.2,494 1179.1,498 1180.7,502" fill="none" stroke="#000" stroke-width="0.8"/>
<polyline points="1205.1,226 1206.6,230 1204.6,234 1206.1,238 1204,242 1205.6,246 1203.5,250 1205.1,254 1203,258 1204.5,262 1202.5,266 1204,270 1201.9,274 1203.5,278 1201.4,282 1202.9,286 1200.9,290 1202.4,294 1200.3,298 1201.9,302 1199.8,306 1201.4,310 1199.3,314 1200.8,318 1198.8,322 1200.3,326 1198.2,330 1199.8,334 1197.7,338 1199.2,342 1197.2,346 1198.7,350 1196.7,354 1198.2,358 1196.1,362 1197.7,366 1195.6,370 1197.1,374 1195.1,378 1196.6,382 1194.5,386 1196.1,390 1194,394 1195.5,398 1193.5,402 1195,406 1193,410 1194.5,414 1192.4,418 1194,422 1191.9,426 1193.4,430 1191.4,434 1192.9,438 1190.8,442 1192.4,446 1190.3,450 1191.9,454 1189.8,458 1191.3,462 1189.3,466 1190.8,470 1188.7,474 1190.3,478 1188.2,482 1189.7,486 1187.7,490 1189.2,494 1187.1,498 1188.7,502" fill="none" stroke="#000" stroke-width="0.8"/>
<polygon points="1196,228 1202,222 1208,228" fill="#b4b4dc" stroke="#000" stroke-width="0.7"/>
<g transform="translate(1165 370)"><ellipse cx="0" cy="0" rx="41.5" ry="45" fill="#f6f6fc" stroke="#000" stroke-width="1"/><ellipse cx="0" cy="0" rx="38" ry="41.5" fill="none" stroke="#000" stroke-width=".6"/>
<g transform="translate(20.1 -16.9) rotate(52)"><path d="M-9.5 -8.5h19l-4.5 17h-10z" fill="#b4b4dc" stroke="#000" stroke-width="1.1" stroke-linejoin="round"/><path d="M-6.5 -5.5h13l-3 11h-7z" fill="none" stroke="#000" stroke-width=".6"/></g>
<g transform="translate(24.8 6.4) rotate(103.4)"><path d="M-9.5 -8.5h19l-4.5 17h-10z" fill="#b4b4dc" stroke="#000" stroke-width="1.1" stroke-linejoin="round"/><path d="M-6.5 -5.5h13l-3 11h-7z" fill="none" stroke="#000" stroke-width=".6"/></g>
<g transform="translate(10.8 24.9) rotate(154.9)"><path d="M-9.5 -8.5h19l-4.5 17h-10z" fill="#b4b4dc" stroke="#000" stroke-width="1.1" stroke-linejoin="round"/><path d="M-6.5 -5.5h13l-3 11h-7z" fill="none" stroke="#000" stroke-width=".6"/></g>
<g transform="translate(-11.3 24.7) rotate(206.3)"><path d="M-9.5 -8.5h19l-4.5 17h-10z" fill="#b4b4dc" stroke="#000" stroke-width="1.1" stroke-linejoin="round"/><path d="M-6.5 -5.5h13l-3 11h-7z" fill="none" stroke="#000" stroke-width=".6"/></g>
<g transform="translate(-24.9 5.9) rotate(257.7)"><path d="M-9.5 -8.5h19l-4.5 17h-10z" fill="#b4b4dc" stroke="#000" stroke-width="1.1" stroke-linejoin="round"/><path d="M-6.5 -5.5h13l-3 11h-7z" fill="none" stroke="#000" stroke-width=".6"/></g>
<g transform="translate(-19.8 -17.4) rotate(309.1)"><path d="M-9.5 -8.5h19l-4.5 17h-10z" fill="#b4b4dc" stroke="#000" stroke-width="1.1" stroke-linejoin="round"/><path d="M-6.5 -5.5h13l-3 11h-7z" fill="none" stroke="#000" stroke-width=".6"/></g>
<g transform="translate(0.3 -27.5) rotate(360.6)"><path d="M-9.5 -8.5h19l-4.5 17h-10z" fill="#b4b4dc" stroke="#000" stroke-width="1.1" stroke-linejoin="round"/><path d="M-6.5 -5.5h13l-3 11h-7z" fill="none" stroke="#000" stroke-width=".6"/></g>
<ellipse cx="0" cy="0" rx="9" ry="10" fill="#f6f6fc" stroke="#000" stroke-width=".7"/></g>
<polygon points="1130,329 1144,330 1142,361 1128,360" fill="#5e5e76" stroke="#000" stroke-width="0.8"/>
<polygon points="1134,335 1140,335 1138.5,355 1132.5,355" fill="#b4b4dc" stroke="#000" stroke-width="0.7"/>
<polygon points="1159,333 1173,334 1171,365 1157,364" fill="#5e5e76" stroke="#000" stroke-width="0.8"/>
<polygon points="1163,339 1169,339 1167.5,359 1161.5,359" fill="#b4b4dc" stroke="#000" stroke-width="0.7"/>
<polygon points="1051,368 1059,368 1057,392 1049,392" fill="#b4b4dc" stroke="#000" stroke-width="0.8"/>
<polygon points="1053,372 1057,372 1055.5,388 1051.5,388" fill="none" stroke="#000" stroke-width="0.6"/>
<polygon points="1051.2,407.5 1136.2,408.8 1131.2,487.5 1061,475 1037.5,472.5 1040,420" fill="#f8f8ff" stroke="#000" stroke-width="0.9"/>
<polygon points="1061,475 1100,458 1132,458 1131.2,487.5" fill="#f4f4fc" stroke="#000" stroke-width="0.7"/>
<polygon points="1040,437 1085,438 1085,451 1040,450" fill="#e4e4ee" stroke="#000" stroke-width="0.8"/>
<polyline points="1040,441 1082,442" fill="none" stroke="#000" stroke-width="0.8"/>
<polyline points="1040,446 1082,447" fill="none" stroke="#000" stroke-width="0.8"/>
<polyline points="1052,437 1052,451" fill="none" stroke="#000" stroke-width="0.7"/>
<polyline points="1066,438 1066,451" fill="none" stroke="#000" stroke-width="0.7"/>
<polygon points="1078,436 1083,436 1083,453 1078,453" fill="#d0d0dc" stroke="#000" stroke-width="0.7"/>
<polyline points="1085,441 1092,441" fill="none" stroke="#ccc" stroke-width="1.4"/>
<ellipse cx="1058.8" cy="426" rx="3.6" ry="3.8" fill="#fff" stroke="#000" stroke-width="0.7"/>
<ellipse cx="1058.8" cy="426" rx="1.4" ry="1.4" fill="#fff" stroke="#000" stroke-width="0.6"/>
<ellipse cx="1086" cy="426.5" rx="5.5" ry="5.5" fill="#50505c" stroke="#000" stroke-width="0.8"/>
<ellipse cx="1086" cy="426.5" rx="2.8" ry="2.8" fill="#d8b8b4" stroke="#000" stroke-width="0.6"/>
<polyline points="1078,420 1094,433" fill="none" stroke="#000" stroke-width="1.8"/>
<polyline points="1094,420 1078,433" fill="none" stroke="#000" stroke-width="1.8"/>
<ellipse cx="1101" cy="428" rx="3.6" ry="3.8" fill="#fff" stroke="#000" stroke-width="0.7"/>
<ellipse cx="1113.8" cy="428.8" rx="8.6" ry="9" fill="#e8c8c6" stroke="#000" stroke-width="0.8"/>
<ellipse cx="1113.8" cy="428.8" rx="3.4" ry="3.6" fill="#f4dcda" stroke="#000" stroke-width="0.6"/>
<ellipse cx="1110" cy="467.5" rx="5.6" ry="5.8" fill="#e8c8c6" stroke="#000" stroke-width="0.8"/>
<ellipse cx="1110" cy="467.5" rx="2.4" ry="2.4" fill="#999" stroke="#000" stroke-width="0.6"/>
<polyline points="1103,461 1117,474" fill="none" stroke="#000" stroke-width="1.2"/>
<ellipse cx="1071" cy="412" rx="1" ry="1" fill="#000"/>
<ellipse cx="1128" cy="414" rx="1" ry="1" fill="#000"/>
<ellipse cx="1121" cy="420" rx="1" ry="1" fill="#000"/>
<ellipse cx="1110" cy="416" rx="1" ry="1" fill="#000"/>
<ellipse cx="1130" cy="440" rx="1" ry="1" fill="#000"/>
<ellipse cx="1082" cy="458" rx="1" ry="1" fill="#000"/>
<ellipse cx="1092" cy="470" rx="1" ry="1" fill="#000"/>
<ellipse cx="1071" cy="466" rx="1" ry="1" fill="#000"/>
<ellipse cx="1100" cy="478" rx="1" ry="1" fill="#000"/>
<ellipse cx="1122" cy="482" rx="1" ry="1" fill="#000"/>
<ellipse cx="1060" cy="432" rx="1" ry="1" fill="#000"/>
<ellipse cx="1046" cy="414" rx="1" ry="1" fill="#000"/>
<polygon points="1040,456 1056,457 1056,470 1049,470 1049,463 1040,462" fill="#3c3c44" stroke="#000" stroke-width="0.6"/>
<polygon points="1153.8,407.5 1165,415 1162.5,485 1147.5,488" fill="#f8f8ff" stroke="#000" stroke-width="0.8"/>
<polygon points="1150,466 1156,466 1155,482 1149,482" fill="#50505c" stroke="#000" stroke-width="0.6"/>
<polygon points="1053.8,178 1059.5,182 1039.4,478 1033.4,478" fill="#6e6e88" stroke="#000" stroke-width="0.6"/>
<polygon points="1035,166.2 1010.9,480 1014.4,480 1038.1,166.6" fill="#a88c82" stroke="#000" stroke-width="0.7"/>
<polygon points="1038.1,166.6 1014.4,480 1018,480 1041.3,167.1" fill="#3c3230" stroke="#000" stroke-width="0.7"/>
<polygon points="1041.3,167.1 1018,480 1021.5,480 1044.4,167.5" fill="#c4a49c" stroke="#000" stroke-width="0.7"/>
<polygon points="1044.4,167.5 1021.5,480 1025,480 1047.5,167.9" fill="#5e4e4a" stroke="#000" stroke-width="0.7"/>
<polygon points="1047.5,167.9 1025,480 1028.5,480 1050.7,168.4" fill="#b09088" stroke="#000" stroke-width="0.7"/>
<polygon points="1050.7,168.4 1028.5,480 1032,480 1053.8,168.8" fill="#3c3230" stroke="#000" stroke-width="0.7"/>
<polygon points="1053.8,168.8 1283.8,207 1282.1,208.7 1053.8,170.7" fill="#b09088" stroke="#000" stroke-width="0.7"/>
<polygon points="1053.8,170.7 1282.1,208.7 1280.5,210.4 1053.8,172.6" fill="#4a3c3a" stroke="#000" stroke-width="0.7"/>
<polygon points="1053.8,172.6 1280.5,210.4 1278.8,212.2 1053.8,174.6" fill="#c0a098" stroke="#000" stroke-width="0.7"/>
<polygon points="1053.8,174.6 1278.8,212.2 1277.2,213.9 1053.8,176.5" fill="#4a3c3a" stroke="#000" stroke-width="0.7"/>
<polygon points="1053.8,176.5 1277.2,213.9 1275.5,215.6 1053.8,178.4" fill="#a88c82" stroke="#000" stroke-width="0.7"/>
<polygon points="1260,216 1241.6,505 1246,505 1264.4,216.6" fill="#6e6e88" stroke="#000" stroke-width="0.7"/>
<polygon points="1264.4,216.6 1246,505 1250.5,505 1268.8,217.2" fill="#5a5a72" stroke="#000" stroke-width="0.7"/>
<polygon points="1268.8,217.2 1250.3,508 1253.3,508 1272.5,214.8" fill="#a88c82" stroke="#000" stroke-width="0.7"/>
<polygon points="1272.5,214.8 1253.3,508 1256.4,508 1276.2,212.3" fill="#3c3230" stroke="#000" stroke-width="0.7"/>
<polygon points="1276.2,212.3 1256.4,508 1259.4,508 1279.9,209.9" fill="#c4a49c" stroke="#000" stroke-width="0.7"/>
<polygon points="1279.9,209.9 1259.4,508 1262.5,508 1283.6,207.5" fill="#4a3c3a" stroke="#000" stroke-width="0.7"/>
<polygon points="1048,180 1058,182 1057,202 1047,200" fill="#3a3a3e" stroke="#000" stroke-width="0.6"/>
<polygon points="1268,222 1281,221 1280,240 1267,241" fill="#3a3a3e" stroke="#000" stroke-width="0.6"/>
<polygon points="1023,455 1036,456 1035,474 1022,473" fill="#3a3a3e" stroke="#000" stroke-width="0.6"/>
<polygon points="1246,494 1259,493 1258,512 1245,513" fill="#3a3a3e" stroke="#000" stroke-width="0.6"/>
<polygon points="1153.8,203.8 1163.8,198.8 1138.9,497 1130.9,490" fill="#5c5c74" stroke="#000" stroke-width="0.8"/>
<polygon points="1163.8,198.8 1170,203.8 1145.7,490 1138.9,497" fill="#8484a2" stroke="#000" stroke-width="0.8"/>
<polygon points="1030,498 1246,536 1175,527 1026,539" fill="#4e4e58" stroke="#000" stroke-width="0.7"/>
<polygon points="1026.2,537.5 1175,526 1243,536.5 1238,541 1025,552" fill="#d2d2e8" stroke="#000" stroke-width="0.7"/>
<polygon points="1025,551.5 1089,548 1078,702 1012,690" fill="#c3a5a3" stroke="#000" stroke-width="0.8"/>
<polygon points="1106.5,548 1237.5,540.5 1222,722 1094,704" fill="#c3a5a3" stroke="#000" stroke-width="0.8"/>
<polygon points="1090,547.5 1098.8,547 1084.1,728 1075.2,730" fill="#d2d2e8" stroke="#000" stroke-width="0.7"/>
<polygon points="1098.8,547 1105,546.8 1091.6,712 1085.4,712" fill="#7a7a88" stroke="#000" stroke-width="0.7"/>
<polygon points="1105,546.8 1108.5,547 1095.6,706 1092.1,706" fill="#6a5650" stroke="#000" stroke-width="0.5"/>
<polygon points="1030,475 1137,497 1243.8,508.8 1257.5,520 1008.8,479.5" fill="#6e6e88" stroke="#000" stroke-width="0.7"/>
<polygon points="1008.8,479.5 1257.5,520 1246.2,536.2 1030,500" fill="#7a7a88" stroke="#000" stroke-width="0.8"/>
<polyline points="1020,484 1250,522.5" fill="none" stroke="#000" stroke-width="0.6"/>
<polygon points="1236,540 1243.8,539.6 1229.5,720.1 1220.8,718.8" fill="#d2d2e8" stroke="#000" stroke-width="0.8"/>
<polygon points="1243.8,539.6 1246.2,536.2 1257.5,520 1239.5,735.5 1228.1,734.8" fill="#7c7c8c" stroke="#000" stroke-width="0.8"/>
<polygon points="946,702.5 1012.5,700 1228.1,734.8 1190,733 1082,729 936.2,737.5" fill="#c3a5a3" stroke="#000" stroke-width="0.7"/>
<polygon points="936.2,737.5 1072.5,730 1160,726.5 1192.5,733.8 1082.5,743.8 936.2,751" fill="#d2d2e8" stroke="#000" stroke-width="0.8"/>
<polyline points="1075,730 1073,744" fill="none" stroke="#000" stroke-width="0.7"/>
<polyline points="1083,729.4 1082,743.6" fill="none" stroke="#000" stroke-width="0.7"/>
<polygon points="930,703 940,702.5 938,737.5 928,738" fill="#d2d2e8" stroke="#000" stroke-width="0.7"/>
<polygon points="940,702.5 946,702.5 944,737 938,737.5" fill="#7a7a88" stroke="#000" stroke-width="0.6"/>
<polygon points="944,708 948,703 946,737" fill="#6a5650" stroke="#000" stroke-width="0.4"/>
<polygon points="1013.8,685 1229.5,720.1 1228.1,734.8 1012.5,700" fill="#7a7a88" stroke="#000" stroke-width="0.8"/>
<polygon points="1008.8,479.5 1018.8,481 1001.1,700 992.3,700.5" fill="#d2d2e8" stroke="#000" stroke-width="0.8"/>
<polygon points="1018.8,481 1030,483 1013.8,686 1001.1,700" fill="#7a7a88" stroke="#000" stroke-width="0.8"/>
<g transform="translate(359 680) scale(1.0)"><rect x="-4.5" y="0" width="9" height="9" fill="#dcdce8" stroke="#000" stroke-width=".7"/><rect x="-3.5" y="9" width="7" height="3" fill="#b8b8c8" stroke="#000" stroke-width=".6"/><rect x="-1.8" y="12" width="3.6" height="14" fill="#e4e4ee" stroke="#000" stroke-width=".6"/><ellipse cx="0" cy="27.5" rx="7" ry="2.2" fill="#d0d0dc" stroke="#000" stroke-width=".8"/><ellipse cx="0" cy="29.5" rx="7" ry="2" fill="#2a2a2a"/></g>
<g transform="translate(383 684) scale(0.95)"><rect x="-5" y="0" width="10" height="3" fill="#d8d8e4" stroke="#000" stroke-width=".7"/><path d="M-5 3h9l1 9-4 6h-5z" fill="#c8c8d6" stroke="#000" stroke-width=".7"/><ellipse cx="1" cy="17" rx="7" ry="8" fill="#e0e0ea" stroke="#000" stroke-width=".8"/><ellipse cx="2" cy="18" rx="4" ry="5" fill="#a8a8b8" stroke="#333" stroke-width=".6"/><path d="M-1 20a3 3 0 0 0 6 0z" fill="#111"/></g>
<g transform="translate(492 672) scale(0.95)"><rect x="-4.5" y="0" width="9" height="9" fill="#dcdce8" stroke="#000" stroke-width=".7"/><rect x="-3.5" y="9" width="7" height="3" fill="#b8b8c8" stroke="#000" stroke-width=".6"/><rect x="-1.8" y="12" width="3.6" height="14" fill="#e4e4ee" stroke="#000" stroke-width=".6"/><ellipse cx="0" cy="27.5" rx="7" ry="2.2" fill="#d0d0dc" stroke="#000" stroke-width=".8"/><ellipse cx="0" cy="29.5" rx="7" ry="2" fill="#2a2a2a"/></g>
<g transform="translate(499 676) scale(0.8)"><rect x="-5" y="0" width="10" height="3" fill="#d8d8e4" stroke="#000" stroke-width=".7"/><path d="M-5 3h9l1 9-4 6h-5z" fill="#c8c8d6" stroke="#000" stroke-width=".7"/><ellipse cx="1" cy="17" rx="7" ry="8" fill="#e0e0ea" stroke="#000" stroke-width=".8"/><ellipse cx="2" cy="18" rx="4" ry="5" fill="#a8a8b8" stroke="#333" stroke-width=".6"/><path d="M-1 20a3 3 0 0 0 6 0z" fill="#111"/></g>
<g transform="translate(522 671) scale(0.95)"><rect x="-4.5" y="0" width="9" height="9" fill="#dcdce8" stroke="#000" stroke-width=".7"/><rect x="-3.5" y="9" width="7" height="3" fill="#b8b8c8" stroke="#000" stroke-width=".6"/><rect x="-1.8" y="12" width="3.6" height="14" fill="#e4e4ee" stroke="#000" stroke-width=".6"/><ellipse cx="0" cy="27.5" rx="7" ry="2.2" fill="#d0d0dc" stroke="#000" stroke-width=".8"/><ellipse cx="0" cy="29.5" rx="7" ry="2" fill="#2a2a2a"/></g>
<g transform="translate(546 676) scale(0.9)"><rect x="-5" y="0" width="10" height="3" fill="#d8d8e4" stroke="#000" stroke-width=".7"/><path d="M-5 3h9l1 9-4 6h-5z" fill="#c8c8d6" stroke="#000" stroke-width=".7"/><ellipse cx="1" cy="17" rx="7" ry="8" fill="#e0e0ea" stroke="#000" stroke-width=".8"/><ellipse cx="2" cy="18" rx="4" ry="5" fill="#a8a8b8" stroke="#333" stroke-width=".6"/><path d="M-1 20a3 3 0 0 0 6 0z" fill="#111"/></g>
<g transform="translate(606 667) scale(0.9)"><rect x="-4.5" y="0" width="9" height="9" fill="#dcdce8" stroke="#000" stroke-width=".7"/><rect x="-3.5" y="9" width="7" height="3" fill="#b8b8c8" stroke="#000" stroke-width=".6"/><rect x="-1.8" y="12" width="3.6" height="14" fill="#e4e4ee" stroke="#000" stroke-width=".6"/><ellipse cx="0" cy="27.5" rx="7" ry="2.2" fill="#d0d0dc" stroke="#000" stroke-width=".8"/><ellipse cx="0" cy="29.5" rx="7" ry="2" fill="#2a2a2a"/></g>
<g transform="translate(612 669) scale(0.75)"><rect x="-5" y="0" width="10" height="3" fill="#d8d8e4" stroke="#000" stroke-width=".7"/><path d="M-5 3h9l1 9-4 6h-5z" fill="#c8c8d6" stroke="#000" stroke-width=".7"/><ellipse cx="1" cy="17" rx="7" ry="8" fill="#e0e0ea" stroke="#000" stroke-width=".8"/><ellipse cx="2" cy="18" rx="4" ry="5" fill="#a8a8b8" stroke="#333" stroke-width=".6"/><path d="M-1 20a3 3 0 0 0 6 0z" fill="#111"/></g>
<polygon points="625,665 634,665 634,674 625,674" fill="#d81818" stroke="#000" stroke-width="0.6"/>
<g transform="translate(629.5 672) scale(0.62)"><rect x="-4.5" y="0" width="9" height="9" fill="#dcdce8" stroke="#000" stroke-width=".7"/><rect x="-3.5" y="9" width="7" height="3" fill="#b8b8c8" stroke="#000" stroke-width=".6"/><rect x="-1.8" y="12" width="3.6" height="14" fill="#e4e4ee" stroke="#000" stroke-width=".6"/><ellipse cx="0" cy="27.5" rx="7" ry="2.2" fill="#d0d0dc" stroke="#000" stroke-width=".8"/><ellipse cx="0" cy="29.5" rx="7" ry="2" fill="#2a2a2a"/></g>
<g transform="translate(653 668) scale(0.9)"><rect x="-5" y="0" width="10" height="3" fill="#d8d8e4" stroke="#000" stroke-width=".7"/><path d="M-5 3h9l1 9-4 6h-5z" fill="#c8c8d6" stroke="#000" stroke-width=".7"/><ellipse cx="1" cy="17" rx="7" ry="8" fill="#e0e0ea" stroke="#000" stroke-width=".8"/><ellipse cx="2" cy="18" rx="4" ry="5" fill="#a8a8b8" stroke="#333" stroke-width=".6"/><path d="M-1 20a3 3 0 0 0 6 0z" fill="#111"/></g>
<g transform="translate(763 658) scale(0.85)"><rect x="-4.5" y="0" width="9" height="9" fill="#dcdce8" stroke="#000" stroke-width=".7"/><rect x="-3.5" y="9" width="7" height="3" fill="#b8b8c8" stroke="#000" stroke-width=".6"/><rect x="-1.8" y="12" width="3.6" height="14" fill="#e4e4ee" stroke="#000" stroke-width=".6"/><ellipse cx="0" cy="27.5" rx="7" ry="2.2" fill="#d0d0dc" stroke="#000" stroke-width=".8"/><ellipse cx="0" cy="29.5" rx="7" ry="2" fill="#2a2a2a"/></g>
<g transform="translate(769 664) scale(0.7)"><rect x="-5" y="0" width="10" height="3" fill="#d8d8e4" stroke="#000" stroke-width=".7"/><path d="M-5 3h9l1 9-4 6h-5z" fill="#c8c8d6" stroke="#000" stroke-width=".7"/><ellipse cx="1" cy="17" rx="7" ry="8" fill="#e0e0ea" stroke="#000" stroke-width=".8"/><ellipse cx="2" cy="18" rx="4" ry="5" fill="#a8a8b8" stroke="#333" stroke-width=".6"/><path d="M-1 20a3 3 0 0 0 6 0z" fill="#111"/></g>
<g transform="translate(572 715) scale(0.95)"><rect x="-5" y="0" width="10" height="3" fill="#d8d8e4" stroke="#000" stroke-width=".7"/><path d="M-5 3h9l1 9-4 6h-5z" fill="#c8c8d6" stroke="#000" stroke-width=".7"/><ellipse cx="1" cy="17" rx="7" ry="8" fill="#e0e0ea" stroke="#000" stroke-width=".8"/><ellipse cx="2" cy="18" rx="4" ry="5" fill="#a8a8b8" stroke="#333" stroke-width=".6"/><path d="M-1 20a3 3 0 0 0 6 0z" fill="#111"/></g>
<g transform="translate(574 722) scale(0.75)"><rect x="-4.5" y="0" width="9" height="9" fill="#dcdce8" stroke="#000" stroke-width=".7"/><rect x="-3.5" y="9" width="7" height="3" fill="#b8b8c8" stroke="#000" stroke-width=".6"/><rect x="-1.8" y="12" width="3.6" height="14" fill="#e4e4ee" stroke="#000" stroke-width=".6"/><ellipse cx="0" cy="27.5" rx="7" ry="2.2" fill="#d0d0dc" stroke="#000" stroke-width=".8"/><ellipse cx="0" cy="29.5" rx="7" ry="2" fill="#2a2a2a"/></g>
<g transform="translate(682 712) scale(0.9)"><rect x="-5" y="0" width="10" height="3" fill="#d8d8e4" stroke="#000" stroke-width=".7"/><path d="M-5 3h9l1 9-4 6h-5z" fill="#c8c8d6" stroke="#000" stroke-width=".7"/><ellipse cx="1" cy="17" rx="7" ry="8" fill="#e0e0ea" stroke="#000" stroke-width=".8"/><ellipse cx="2" cy="18" rx="4" ry="5" fill="#a8a8b8" stroke="#333" stroke-width=".6"/><path d="M-1 20a3 3 0 0 0 6 0z" fill="#111"/></g>
<g transform="translate(708 710) scale(1.0)"><rect x="-4.5" y="0" width="9" height="9" fill="#dcdce8" stroke="#000" stroke-width=".7"/><rect x="-3.5" y="9" width="7" height="3" fill="#b8b8c8" stroke="#000" stroke-width=".6"/><rect x="-1.8" y="12" width="3.6" height="14" fill="#e4e4ee" stroke="#000" stroke-width=".6"/><ellipse cx="0" cy="27.5" rx="7" ry="2.2" fill="#d0d0dc" stroke="#000" stroke-width=".8"/><ellipse cx="0" cy="29.5" rx="7" ry="2" fill="#2a2a2a"/></g>
<g transform="translate(731 715) scale(0.9)"><rect x="-5" y="0" width="10" height="3" fill="#d8d8e4" stroke="#000" stroke-width=".7"/><path d="M-5 3h9l1 9-4 6h-5z" fill="#c8c8d6" stroke="#000" stroke-width=".7"/><ellipse cx="1" cy="17" rx="7" ry="8" fill="#e0e0ea" stroke="#000" stroke-width=".8"/><ellipse cx="2" cy="18" rx="4" ry="5" fill="#a8a8b8" stroke="#333" stroke-width=".6"/><path d="M-1 20a3 3 0 0 0 6 0z" fill="#111"/></g>
<g transform="translate(844 703) scale(0.85)"><rect x="-5" y="0" width="10" height="3" fill="#d8d8e4" stroke="#000" stroke-width=".7"/><path d="M-5 3h9l1 9-4 6h-5z" fill="#c8c8d6" stroke="#000" stroke-width=".7"/><ellipse cx="1" cy="17" rx="7" ry="8" fill="#e0e0ea" stroke="#000" stroke-width=".8"/><ellipse cx="2" cy="18" rx="4" ry="5" fill="#a8a8b8" stroke="#333" stroke-width=".6"/><path d="M-1 20a3 3 0 0 0 6 0z" fill="#111"/></g>
<g transform="translate(844 708) scale(0.72)"><rect x="-4.5" y="0" width="9" height="9" fill="#dcdce8" stroke="#000" stroke-width=".7"/><rect x="-3.5" y="9" width="7" height="3" fill="#b8b8c8" stroke="#000" stroke-width=".6"/><rect x="-1.8" y="12" width="3.6" height="14" fill="#e4e4ee" stroke="#000" stroke-width=".6"/><ellipse cx="0" cy="27.5" rx="7" ry="2.2" fill="#d0d0dc" stroke="#000" stroke-width=".8"/><ellipse cx="0" cy="29.5" rx="7" ry="2" fill="#2a2a2a"/></g>
<g transform="translate(952 697) scale(0.9)"><rect x="-5" y="0" width="10" height="3" fill="#d8d8e4" stroke="#000" stroke-width=".7"/><path d="M-5 3h9l1 9-4 6h-5z" fill="#c8c8d6" stroke="#000" stroke-width=".7"/><ellipse cx="1" cy="17" rx="7" ry="8" fill="#e0e0ea" stroke="#000" stroke-width=".8"/><ellipse cx="2" cy="18" rx="4" ry="5" fill="#a8a8b8" stroke="#333" stroke-width=".6"/><path d="M-1 20a3 3 0 0 0 6 0z" fill="#111"/></g>
<g transform="translate(977 693) scale(0.95)"><rect x="-4.5" y="0" width="9" height="9" fill="#dcdce8" stroke="#000" stroke-width=".7"/><rect x="-3.5" y="9" width="7" height="3" fill="#b8b8c8" stroke="#000" stroke-width=".6"/><rect x="-1.8" y="12" width="3.6" height="14" fill="#e4e4ee" stroke="#000" stroke-width=".6"/><ellipse cx="0" cy="27.5" rx="7" ry="2.2" fill="#d0d0dc" stroke="#000" stroke-width=".8"/><ellipse cx="0" cy="29.5" rx="7" ry="2" fill="#2a2a2a"/></g>
<g transform="translate(1001 696) scale(0.9)"><rect x="-4.5" y="0" width="9" height="9" fill="#dcdce8" stroke="#000" stroke-width=".7"/><rect x="-3.5" y="9" width="7" height="3" fill="#b8b8c8" stroke="#000" stroke-width=".6"/><rect x="-1.8" y="12" width="3.6" height="14" fill="#e4e4ee" stroke="#000" stroke-width=".6"/><ellipse cx="0" cy="27.5" rx="7" ry="2.2" fill="#d0d0dc" stroke="#000" stroke-width=".8"/><ellipse cx="0" cy="29.5" rx="7" ry="2" fill="#2a2a2a"/></g>
<g transform="translate(1001 700) scale(0.7)"><rect x="-5" y="0" width="10" height="3" fill="#d8d8e4" stroke="#000" stroke-width=".7"/><path d="M-5 3h9l1 9-4 6h-5z" fill="#c8c8d6" stroke="#000" stroke-width=".7"/><ellipse cx="1" cy="17" rx="7" ry="8" fill="#e0e0ea" stroke="#000" stroke-width=".8"/><ellipse cx="2" cy="18" rx="4" ry="5" fill="#a8a8b8" stroke="#333" stroke-width=".6"/><path d="M-1 20a3 3 0 0 0 6 0z" fill="#111"/></g>
<g transform="translate(934 752) scale(0.95)"><rect x="-5" y="0" width="10" height="3" fill="#d8d8e4" stroke="#000" stroke-width=".7"/><path d="M-5 3h9l1 9-4 6h-5z" fill="#c8c8d6" stroke="#000" stroke-width=".7"/><ellipse cx="1" cy="17" rx="7" ry="8" fill="#e0e0ea" stroke="#000" stroke-width=".8"/><ellipse cx="2" cy="18" rx="4" ry="5" fill="#a8a8b8" stroke="#333" stroke-width=".6"/><path d="M-1 20a3 3 0 0 0 6 0z" fill="#111"/></g>
<g transform="translate(934 758) scale(0.8)"><rect x="-4.5" y="0" width="9" height="9" fill="#dcdce8" stroke="#000" stroke-width=".7"/><rect x="-3.5" y="9" width="7" height="3" fill="#b8b8c8" stroke="#000" stroke-width=".6"/><rect x="-1.8" y="12" width="3.6" height="14" fill="#e4e4ee" stroke="#000" stroke-width=".6"/><ellipse cx="0" cy="27.5" rx="7" ry="2.2" fill="#d0d0dc" stroke="#000" stroke-width=".8"/><ellipse cx="0" cy="29.5" rx="7" ry="2" fill="#2a2a2a"/></g>
<g transform="translate(1201 733) scale(0.95)"><rect x="-5" y="0" width="10" height="3" fill="#d8d8e4" stroke="#000" stroke-width=".7"/><path d="M-5 3h9l1 9-4 6h-5z" fill="#c8c8d6" stroke="#000" stroke-width=".7"/><ellipse cx="1" cy="17" rx="7" ry="8" fill="#e0e0ea" stroke="#000" stroke-width=".8"/><ellipse cx="2" cy="18" rx="4" ry="5" fill="#a8a8b8" stroke="#333" stroke-width=".6"/><path d="M-1 20a3 3 0 0 0 6 0z" fill="#111"/></g>
<g transform="translate(1231 737) scale(0.92)"><rect x="-4.5" y="0" width="9" height="9" fill="#dcdce8" stroke="#000" stroke-width=".7"/><rect x="-3.5" y="9" width="7" height="3" fill="#b8b8c8" stroke="#000" stroke-width=".6"/><rect x="-1.8" y="12" width="3.6" height="14" fill="#e4e4ee" stroke="#000" stroke-width=".6"/><ellipse cx="0" cy="27.5" rx="7" ry="2.2" fill="#d0d0dc" stroke="#000" stroke-width=".8"/><ellipse cx="0" cy="29.5" rx="7" ry="2" fill="#2a2a2a"/></g>
<g shape-rendering="auto"><defs><linearGradient id="wmg" x1="0" y1="0" x2="1" y2="1"><stop offset="0" stop-color="#f8b41a"/><stop offset="1" stop-color="#ee6a14"/></linearGradient><linearGradient id="wmv" x1="0" y1="0" x2="0" y2="1"><stop offset="0" stop-color="#ee6c16"/><stop offset="1" stop-color="#f6a21c"/></linearGradient></defs><g fill="url(#wmv)"><path d="M891.2 517.400l2.400-2.600v24.200h-2.400zM894.800 513l2.700-2.800v26.800l-2.700-.3zM899 510.400l2.800-2.600v27l-2.800-.4z"/><path d="M936.300 517.400l-2.400-2.600v24.200h2.400zM932.700 513l-2.700-2.800v26.800l2.700-.3zM928.500 510.400l-2.800-2.600v27l2.800-.4z"/><path d="M891.200 537.600q12 .2 18 1.400h9q6-1.200 18-1.400v2.200h-45z"/><path d="M901.800 533.400q5 1.600 7.600 4.600M925.700 533.400q-5 1.600-7.600 4.600" fill="none" stroke="#f29a1c" stroke-width="1"/></g><path d="M909.200 537.400h8.600v2.400h-8.600z" fill="#ea4e12"/><path d="M913.500 510.500a10 11 0 0 0-6.600 19.200q-3.400-7 1.400-11.200 2.600-2 5.200-8z" fill="url(#wmg)"/><path d="M913 512v25.500q1.600-.6 2.600-2.400v-10.800q4.400 1 5.600-4.400 1.400 7-3.600 10.400 6.600-2.400 5.800-9.600-.8-5.600-5.400-7.600 1.800 4.400-.4 6.200-2 1.400-2-2.300v-5z" fill="url(#wmg)"/></g>
<text x="947" y="529" font-size="16.6" font-weight="500" fill="#f0862a" textLength="82.5" lengthAdjust="spacingAndGlyphs">智造资料网</text>
<text x="947" y="538.2" font-size="4.6" fill="#f0862a" textLength="82" lengthAdjust="spacingAndGlyphs" font-weight="bold">INTELLIGENT MANUFACTURING DATA</text>
<g><polygon points="123.5,917 138,917 142,920 141,941 120.5,941" fill="#8a9a70"/><polyline points="123.5,916 137.5,915 136,941" fill="none" stroke="#d8d8dc" stroke-width="1"/><polyline points="124,917.6 138,918 142.4,920.6 141,941" fill="none" stroke="#f4f010" stroke-width="1.2"/><path d="M120 941L123.4 898" stroke="#00e000" stroke-width="2.6"/><path d="M124 892l-5.200 10.400 9.200 .6z" fill="#00e000"/><path d="M121 942l19 3" stroke="#a00808" stroke-width="2.6"/><path d="M136 943l6 1-2.600 6-3.400-3z" fill="#f01010"/><path d="M143 945l13-1" stroke="#d8d8dc" stroke-width="1.4"/><path d="M120 941.5L158 939" stroke="#00e0f0" stroke-width="2.6"/><path d="M166 938.6l-9-4.4 .6 9.4z" fill="#00e0f0"/><circle cx="119.5" cy="942" r="3" fill="#8a8a8a"/><text x="119.5" y="889" font-size="10" fill="#e01010">Y</text><text x="165.5" y="943" font-size="10" fill="#e8e8e8">Z</text><text x="147.5" y="951.5" font-size="9" fill="#e01010">X</text></g>
</svg>
<svg class="ic" style="left:65.5px;top:114.5px;width:21px;height:21px" viewBox="0 0 20 20"><rect x="2" y="3" width="16" height="3.4" fill="#3e5a9a"/><rect x="2" y="8.3" width="16" height="3.4" fill="#3e5a9a"/><rect x="2" y="13.6" width="16" height="3.4" fill="#3e5a9a"/></svg>
<svg class="ic" style="left:93.5px;top:114.5px;width:21px;height:21px" viewBox="0 0 20 20"><rect x="4.5" y="4.5" width="11" height="11" fill="#dfe9fa" stroke="#3a3f4a" stroke-width="1.1"/><rect x="5.5" y="5.5" width="5" height="4" fill="#f8fbff"/><path d="M1 1l4.6 1.2-3.4 3.4zM19 1l-4.600 1.2 3.4 3.4zM1 19l4.600-1.200-3.4-3.4zM19 19l-4.600-1.200 3.4-3.4z" fill="#30b830"/></svg>
<svg class="ic" style="left:121.5px;top:114.5px;width:21px;height:21px" viewBox="0 0 20 20"><circle cx="8" cy="8" r="5" fill="#dfe8f6" stroke="#7a8296" stroke-width="1.6"/><path d="M12 12l6 6" stroke="#8a8270" stroke-width="2.6"/></svg>
<svg class="ic" style="left:149.5px;top:114.5px;width:21px;height:21px" viewBox="0 0 20 20"><path d="M2 12l8-4 8 4-8 5z" fill="#d8dcea" stroke="#8890a8" stroke-width=".7"/><path d="M7 12V2" stroke="#2060e0" stroke-width="1.6"/><path d="M7 12l9 5" stroke="#e02020" stroke-width="1.6"/><path d="M7 12l8-6" stroke="#20a020" stroke-width="1.6"/><path d="M7 0l-2.2 4h4.4z" fill="#2060e0"/><circle cx="7" cy="12" r="1.5" fill="#eee" stroke="#333" stroke-width=".6"/></svg>
<svg class="ic" style="left:176.0px;top:113.0px;width:24px;height:24px" viewBox="0 0 20 20"><path d="M2 6l8-3.400 8 3.400-8 3.600zM2 6v9.400l8 3.600 8-3.600V6M10 9.600v9.400M10 2.600v9.400M2 15.400l8-3.400 8 3.400" fill="none" stroke="#0a0a0a" stroke-width="1.150" stroke-linejoin="round"/><polygon points="2,6 10,2.600 18,6 10,9.600" fill="#27c827" stroke="#0a0a0a" stroke-width=".9" stroke-linejoin="round"/></svg>
<svg class="ic" style="left:204.0px;top:113.0px;width:24px;height:24px" viewBox="0 0 20 20"><path d="M2 6l8-3.400 8 3.400-8 3.600zM2 6v9.400l8 3.600 8-3.600V6M10 9.600v9.400M10 2.600v9.400M2 15.400l8-3.400 8 3.400" fill="none" stroke="#0a0a0a" stroke-width="1.150" stroke-linejoin="round"/><polygon points="2,15.400 10,12 18,15.400 10,19" fill="#27c827" stroke="#0a0a0a" stroke-width=".9" stroke-linejoin="round"/></svg>
<svg class="ic" style="left:232.0px;top:113.0px;width:24px;height:24px" viewBox="0 0 20 20"><path d="M2 6l8-3.400 8 3.400-8 3.600zM2 6v9.400l8 3.600 8-3.600V6M10 9.600v9.400M10 2.600v9.400M2 15.400l8-3.400 8 3.400" fill="none" stroke="#0a0a0a" stroke-width="1.150" stroke-linejoin="round"/><polygon points="2,6 10,2.600 10,12 2,15.400" fill="#27c827" stroke="#0a0a0a" stroke-width=".9" stroke-linejoin="round"/></svg>
<svg class="ic" style="left:260.0px;top:113.0px;width:24px;height:24px" viewBox="0 0 20 20"><path d="M2 6l8-3.400 8 3.400-8 3.600zM2 6v9.400l8 3.600 8-3.600V6M10 9.600v9.400M10 2.600v9.400M2 15.400l8-3.400 8 3.400" fill="none" stroke="#0a0a0a" stroke-width="1.150" stroke-linejoin="round"/><polygon points="10,9.600 18,6 18,15.400 10,19" fill="#27c827" stroke="#0a0a0a" stroke-width=".9" stroke-linejoin="round"/></svg>
<svg class="ic" style="left:288.0px;top:113.0px;width:24px;height:24px" viewBox="0 0 20 20"><path d="M2 6l8-3.400 8 3.400-8 3.600zM2 6v9.400l8 3.600 8-3.600V6M10 9.600v9.400M10 2.600v9.400M2 15.400l8-3.400 8 3.400" fill="none" stroke="#0a0a0a" stroke-width="1.150" stroke-linejoin="round"/><polygon points="2,6 10,9.600 10,19 2,15.400" fill="#27c827" stroke="#0a0a0a" stroke-width=".9" stroke-linejoin="round"/></svg>
<svg class="ic" style="left:316.0px;top:113.0px;width:24px;height:24px" viewBox="0 0 20 20"><path d="M2 6l8-3.400 8 3.400-8 3.600zM2 6v9.400l8 3.600 8-3.600V6M10 9.600v9.400M10 2.600v9.400M2 15.400l8-3.400 8 3.400" fill="none" stroke="#0a0a0a" stroke-width="1.150" stroke-linejoin="round"/><polygon points="10,2.600 18,6 18,15.400 10,12" fill="#27c827" stroke="#0a0a0a" stroke-width=".9" stroke-linejoin="round"/></svg>
<svg class="ic" style="left:344.0px;top:113.0px;width:24px;height:24px" viewBox="0 0 20 20"><path d="M2 6l8-3.400 8 3.400-8 3.600z" fill="#7af07a"/><path d="M2 6l8 3.600v9.400l-8-3.600z" fill="#28c428"/><path d="M18 6l-8 3.600v9.400l8-3.600z" fill="#149214"/></svg>
<svg class="ic" style="left:66.0px;top:143.0px;width:20px;height:20px" viewBox="0 0 20 20"><ellipse cx="10" cy="4.5" rx="4.5" ry="2" fill="#e8ebf4" stroke="#333" stroke-width="1"/><path d="M5.5 4.5V15.5A4.5 2 0 0 0 14.5 15.5V4.5" fill="none" stroke="#333" stroke-width="1"/></svg>
<svg class="ic" style="left:66.0px;top:171.0px;width:20px;height:20px" viewBox="0 0 20 20"><ellipse cx="10" cy="4.5" rx="4.5" ry="2" fill="none" stroke="#333" stroke-width="1"/><path d="M5.5 4.5V15.5A4.5 2 0 0 0 14.5 15.5V4.5" fill="none" stroke="#333" stroke-width="1"/><path d="M5.5 15.5A4.5 2 0 0 1 14.5 15.5" fill="none" stroke="#777" stroke-width=".7"/></svg>
<svg class="ic" style="left:66.0px;top:199.0px;width:20px;height:20px" viewBox="0 0 20 20"><path d="M5.5 4.5V15.5A4.5 2 0 0 0 14.5 15.5V4.5Z" fill="#3b78d4" stroke="#111" stroke-width=".9"/><path d="M6 5V15.5A4.5 2 0 0 0 9 17V6.5Z" fill="#a8ccf6"/><ellipse cx="10" cy="4.5" rx="4.5" ry="2" fill="#7db0ee" stroke="#111" stroke-width=".9"/></svg>
<svg class="ic" style="left:66.0px;top:227.0px;width:20px;height:20px" viewBox="0 0 20 20"><path d="M5.5 4.5V15.5A4.5 2 0 0 0 14.5 15.5V4.5Z" fill="#dfe6f4" stroke="#667" stroke-width=".9"/><ellipse cx="10" cy="4.5" rx="4.5" ry="2" fill="#f2f5fb" stroke="#667" stroke-width=".9"/></svg>
<svg class="ic" style="left:66.0px;top:255.0px;width:20px;height:20px" viewBox="0 0 20 20"><path d="M5.5 4.5V15.5A4.5 2 0 0 0 14.5 15.5V4.5Z" fill="#b9bcc6" stroke="#222" stroke-width=".9"/><ellipse cx="10" cy="4.5" rx="4.5" ry="2" fill="#d4d6de" stroke="#222" stroke-width=".9"/><path d="M7 6L9 17M10 6.5L8 17M10 6.5L12 17M13 6L11.5 17" stroke="#333" stroke-width=".6" fill="none"/></svg>
<div id="status"><div class="ln"></div>
<div class="abs" style="left:1341px;top:2px;width:131px;height:16px;background:#fff"></div>
<div class="abs" style="left:1336px;top:3px;width:3px;height:14px;background-image:repeating-linear-gradient(180deg,#9aa2b8 0 1px,#f4f6fb 1px 2px,transparent 2px 4px)"></div>
<div class="abs" style="left:1476px;top:3px;width:3px;height:14px;background-image:repeating-linear-gradient(180deg,#9aa2b8 0 1px,#f4f6fb 1px 2px,transparent 2px 4px)"></div>
<svg class="abs" style="left:1461px;top:3px" width="12" height="12" viewBox="0 0 12 12"><circle cx="6" cy="6" r="4.2" fill="#eef4fc" stroke="#6a9ad8" stroke-width="1.2"/></svg>
<svg class="abs" style="left:1366px;top:20px" width="90" height="19" viewBox="0 0 90 19"><rect x="3" y="2" width="11" height="14" fill="#e8eee8" stroke="#6a8a6a" stroke-width="1.2"/><circle cx="41" cy="8" r="6.4" fill="none" stroke="#2a9a2a" stroke-width="2.2"/><rect x="64" y="3" width="7" height="12" fill="#e8e8f0" stroke="#667" stroke-width="1.1"/><rect x="72" y="3" width="7" height="12" fill="#e8e8f0" stroke="#667" stroke-width="1.1"/></svg>
<span style="left:1486px;top:2px">绝对 XY 上视图</span>
<div class="abs" style="left:1592px;top:3px;width:1px;height:14px;background:#a0a4b0"></div>
<span style="left:1601px;top:2px">绝对视图</span>
<div class="abs" style="left:1659px;top:3px;width:3px;height:14px;background-image:repeating-linear-gradient(180deg,#9aa2b8 0 1px,#f4f6fb 1px 2px,transparent 2px 4px)"></div>
<span style="left:1669px;top:2px;font-weight:bold;font-size:12px">LAYER0</span>
<div class="abs" style="left:1727px;top:3px;width:1px;height:14px;background:#a0a4b0"></div>
<div class="abs" style="left:1752px;top:3px;width:1px;height:14px;background:#a0a4b0"></div>
<div class="abs" style="left:1798px;top:3px;width:1px;height:14px;background:#a0a4b0"></div>
<div class="abs" style="left:1841px;top:3px;width:1px;height:14px;background:#a0a4b0"></div>
<div class="abs" style="left:1888px;top:3px;width:1px;height:14px;background:#a0a4b0"></div>
<div class="abs" style="left:1762px;top:5px;width:32px;height:11px;background:#4a6088"></div>
<div class="abs" style="left:1805px;top:5px;width:32px;height:11px;background:#4a6088"></div>
<div class="abs" style="left:1848px;top:5px;width:32px;height:11px;background:#4a6088"></div>
<svg class="ic" style="left:1891.0px;top:-1.0px;width:20px;height:20px" viewBox="0 0 20 20"><circle cx="10" cy="10" r="8" fill="#1c58c8" stroke="#0c2a70" stroke-width=".8"/><path d="M5 5q4-2 6 1t-2 5q-4 1-4-2zM12 12q4-2 5 0-1 4-4 4z" fill="#38b838"/></svg>
<span style="left:1141px;top:22px">拴牢</span>
<div class="abs" style="left:1133px;top:22px;width:1px;height:15px;background:#a0a4b0"></div>
<div class="abs" style="left:1173px;top:22px;width:1px;height:15px;background:#a0a4b0"></div>
<div class="abs" style="left:1205px;top:22px;width:1px;height:15px;background:#a0a4b0"></div>
<div class="abs" style="left:1236px;top:22px;width:1px;height:15px;background:#a0a4b0"></div>
<div class="abs" style="left:1267px;top:22px;width:1px;height:15px;background:#a0a4b0"></div>
<div class="abs" style="left:1298px;top:22px;width:1px;height:15px;background:#a0a4b0"></div>
<div class="abs" style="left:1329px;top:22px;width:1px;height:15px;background:#a0a4b0"></div>
<div class="abs" style="left:1361px;top:22px;width:1px;height:15px;background:#a0a4b0"></div>
<div class="abs" style="left:1392px;top:22px;width:1px;height:15px;background:#a0a4b0"></div>
<div class="abs" style="left:1423px;top:22px;width:1px;height:15px;background:#a0a4b0"></div>
<div class="abs" style="left:1454px;top:22px;width:1px;height:15px;background:#a0a4b0"></div>
<div class="abs" style="left:1580px;top:22px;width:1px;height:15px;background:#a0a4b0"></div>
<div class="abs" style="left:1654px;top:22px;width:1px;height:15px;background:#a0a4b0"></div>
<svg class="ic" style="left:1180.0px;top:19.0px;width:20px;height:20px" viewBox="0 0 20 20"><rect x="2" y="2" width="16" height="16" fill="#f0c8c8" stroke="#c03030" stroke-width="1.4"/><path d="M5 10a5 5 0 0 1 9-3l2-2v5h-5l2-2a3 3 0 0 0-5 2z" fill="#d04040"/><path d="M15 11a5 5 0 0 1-9 3l-2 2v-5h5l-2 2a3 3 0 0 0 5-2z" fill="#d04040"/></svg>
<svg class="ic" style="left:1210.0px;top:19.0px;width:20px;height:20px" viewBox="0 0 20 20"><rect x="1" y="1" width="18" height="18" fill="#f6dc6a"/><path d="M4 3l10 6-4 1 3 6-2 1-3-6-3 3z" fill="#b050c0" stroke="#502060" stroke-width=".7"/></svg>
<svg class="ic" style="left:1242.0px;top:19.0px;width:20px;height:20px" viewBox="0 0 20 20"><path d="M2 10l8-7 8 7v2H2z" fill="#d09838" stroke="#704010" stroke-width=".8"/><rect x="4" y="10" width="12" height="8" fill="#c8d4f0" stroke="#445" stroke-width=".8"/><rect x="8" y="12" width="4" height="6" fill="#5a78c8"/></svg>
<svg class="ic" style="left:1273.0px;top:19.0px;width:20px;height:20px" viewBox="0 0 20 20"><text x="10" y="16" font-size="18" font-weight="bold" text-anchor="middle" fill="#3a68c8" font-family='Liberation Sans',sans-serif>?</text></svg>
<svg class="ic" style="left:1304.0px;top:19.0px;width:20px;height:20px" viewBox="0 0 20 20"><path d="M8 8l5-2 5 2v7l-5 2.5-5-2.5z" fill="#6a8ab8" stroke="#223" stroke-width=".7"/><path d="M2 6l7 4M2 12l7-2M5 3l4 7" stroke="#e02020" stroke-width="1.8"/></svg>
<svg class="ic" style="left:1335.0px;top:19.0px;width:20px;height:20px" viewBox="0 0 20 20"><rect x="1" y="1" width="18" height="18" fill="#f6dc6a"/><path d="M3 7l7-3 7 3-7 3z" fill="#e060e0" stroke="#333" stroke-width=".6"/><path d="M3 7l7 3v8l-7-3z" fill="#40c0e0" stroke="#333" stroke-width=".6"/><path d="M17 7l-7 3v8l7-3z" fill="#8040c0" stroke="#333" stroke-width=".6"/></svg>
<span style="left:1463px;top:23px;font-size:13px">LS: 1.00 PS: 1.00</span>
<span style="left:1588px;top:22px">单位: 毫米</span>
<span style="left:1663px;top:22px;color:#e0101a">X =-2032.626</span>
<span style="left:1745px;top:22px">Y = 0291.558 Z = 0000.000</span>
</div>
<div class="abs" style="left:1368px;top:1009px;width:198px;height:24px;background:#fff;border:1px solid #c9ccd4;border-radius:2px"></div>
<svg class="abs" style="left:1355px;top:1002px" width="215" height="38" viewBox="1355 1002 215 38"><rect x="1361" y="1007.5" width="25" height="24.5" rx="5" fill="#f1511f" transform="rotate(-9 1373.5 1019.5)"/><text x="1373.5" y="1029.4" font-size="27" font-weight="bold" font-style="italic" text-anchor="middle" fill="#fff" font-family="'Liberation Sans',sans-serif" transform="rotate(-9 1373.5 1019.5)">S</text><text x="1399.7" y="1026.4" font-size="17.5" font-weight="bold" text-anchor="middle" fill="#1f74cf" font-family="'Noto Sans CJK SC',sans-serif">中</text><circle cx="1417.8" cy="1017" r="1.7" fill="none" stroke="#1f74cf" stroke-width="1.3"/><path d="M1425.6 1022.6q1.4 2.2-1.8 4.6" stroke="#1f74cf" stroke-width="2" fill="none"/><circle cx="1443.7" cy="1020.6" r="7.2" fill="none" stroke="#1f74cf" stroke-width="1.6"/><path d="M1441 1016.6v3M1446.4 1016.6v3" stroke="#1f74cf" stroke-width="1.5"/><path d="M1439.8 1022.4q3.9 4.2 7.8 0" stroke="#1f74cf" stroke-width="1.4" fill="none"/><rect x="1462.4" y="1012.8" width="6.6" height="11.4" rx="3.3" fill="#1f74cf"/><path d="M1460 1020a5.7 5.7 0 0 0 11.4 0M1465.7 1026v2.6M1462.6 1028.8h6.2" stroke="#1f74cf" stroke-width="1.5" fill="none"/><rect x="1480" y="1015.4" width="16.4" height="11.2" rx="1.6" fill="#1f74cf"/><path d="M1482 1018.4h12.6M1482 1021h12.6" stroke="#fff" stroke-width="1.3" stroke-dasharray="1.6 1.1"/><path d="M1484 1024h8.4" stroke="#fff" stroke-width="1.3"/><circle cx="1510" cy="1016.6" r="3.5" fill="#b8bec8"/><path d="M1503.4 1027.4q.6-7 6.6-7t6.6 7z" fill="#b8bec8"/><circle cx="1514.8" cy="1025.6" r="3" fill="#d4d8e0"/><path d="M1525 1016.4l4.6-2.6q2.4 2 4.8 0l4.6 2.6-2.2 3.4-1.8-.9v8.7h-6v-8.7l-1.8.9z" fill="#1f74cf"/><rect x="1547.4" y="1015.2" width="5.2" height="5.2" fill="#1f74cf"/><rect x="1554" y="1015.2" width="5.2" height="5.2" fill="none" stroke="#1f74cf" stroke-width="1.2"/><rect x="1547.4" y="1021.8" width="5.2" height="5.2" fill="#1f74cf"/><rect x="1554" y="1021.8" width="5.2" height="5.2" fill="#1f74cf"/></svg>
<div id="task"><div class="abs" style="left:48px;top:0;width:344px;height:8px;background:#f1f1f1;border-top:1px solid #c8c8c8"></div><div class="abs" style="left:589px;top:0;width:48px;height:8px;background:#a85f2a"></div><div class="abs" style="left:637px;top:0;width:49px;height:8px;background:#4e4e50"></div><span class="abs" style="left:1813px;top:1px;color:#fff;font-size:12px;line-height:12px">11:50</span></div>
</body></html>
